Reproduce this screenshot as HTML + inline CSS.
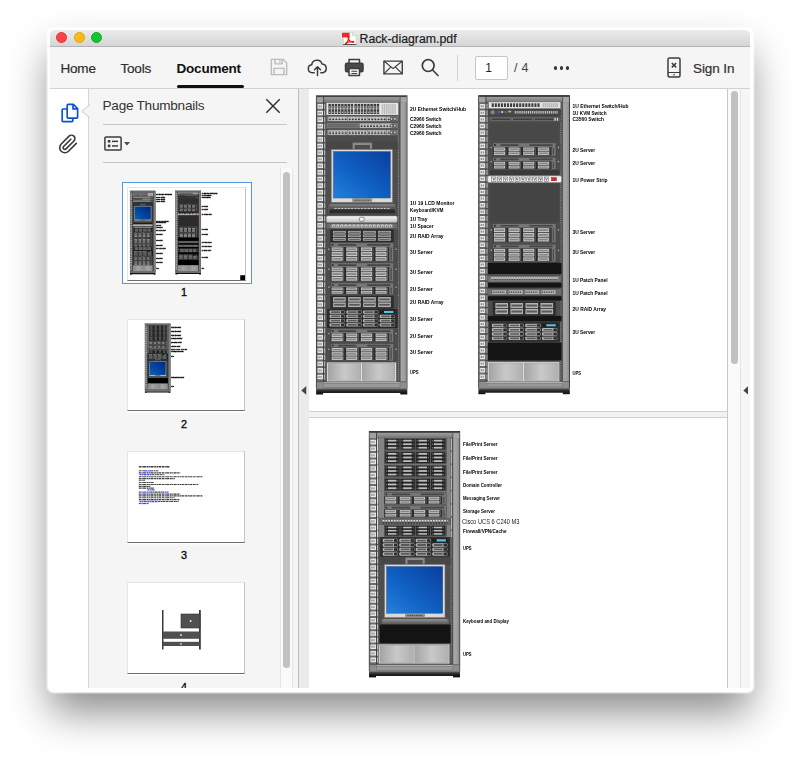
<!DOCTYPE html><html><head><meta charset="utf-8"><title>Rack-diagram.pdf</title><style>
*{box-sizing:border-box;margin:0;padding:0}
html,body{width:800px;height:761px;overflow:hidden;background:#fff}
body{font-family:"Liberation Sans",sans-serif;color:#2c2c2c;position:relative}
.abs{position:absolute}
#halo{left:47.500px;top:27.500px;width:705px;height:664px;background:#fff;border-radius:6px;
  box-shadow:0 0 2px .5px #fff}
#shadow{left:50px;top:30px;width:700px;height:660px;border-radius:5px;
  box-shadow:0 22px 40px 0 rgba(0,0,0,.46)}
#win{left:50px;top:30px;width:700px;height:660px;border-radius:5px 5px 3px 3px;overflow:hidden;background:#f5f5f5}
#title{left:0;top:0;width:700px;height:17px;background:linear-gradient(#ebebeb,#d5d5d5);border-bottom:1px solid #b4b4b4}
.tl{width:11px;height:11px;border-radius:50%;top:2px}
#ttext{top:1.500px;left:309.500px;font-size:12.300px;line-height:15px;color:#1e1e1e;white-space:nowrap;-webkit-text-stroke:.2px #1e1e1e}
#toolbar{left:0;top:17px;width:700px;height:42px;background:#f5f5f5;border-bottom:1px solid #d2d2d2}
.tab{top:14px;font-size:13.500px;line-height:16px;color:#2e2e2e;white-space:nowrap;letter-spacing:-.2px;-webkit-text-stroke:.2px #2e2e2e}
#rail{left:0;top:59px;width:39px;height:601px;background:#fff;border-right:1px solid #d6d6d6}
#panel{left:39px;top:59px;width:209px;height:601px;background:#f5f5f5}
.hr{height:1px;background:#c6c6c6;left:14px;width:184px}
#gut{left:248px;top:59px;width:11px;height:601px;background:#ebebeb;border-left:1px solid #bdbdbd}
#doc{left:259px;top:59px;width:418px;height:601px;background:#f2f2f2;overflow:hidden}
.page{left:0;width:418px;background:#fff}
#vsb{left:677px;top:59px;width:14px;height:601px;background:#fafafa;border-left:1px solid #c8c8c8;border-right:1px solid #e3e3e3}
#rgut{left:691px;top:59px;width:9px;height:601px;background:#f6f6f6}
.thumb{background:#fff;border-right:1.500px solid #c2c2c2;border-bottom:1.300px solid #6e6e6e;border-top:.6px solid #e6e6e6;border-left:.6px solid #e6e6e6;overflow:hidden;box-shadow:0 1.400px 0 #fff}
.tn{font-size:10.800px;line-height:11px;width:20px;text-align:center;color:#000;-webkit-text-stroke:.35px #111}
</style></head><body><div id="shadow" class="abs"></div><div id="halo" class="abs"></div><div id="win" class="abs"><div id="title" class="abs"><div class="abs tl" style="left:6px;background:#fc4249;border:.5px solid #e2343b"></div><div class="abs tl" style="left:23.5px;background:#fdb915;border:.5px solid #e2a212"></div><div class="abs tl" style="left:41px;background:#13c431;border:.5px solid #10a929"></div><svg class="abs" style="left:291.500px;top:1.500px" width="15" height="13.500" viewBox="0 0 15 13.500"><path d="M1.300 .4h9.200l3.600 3.300v9H1.300z" fill="#fff" stroke="#c4c4c4" stroke-width=".6"/><path d="M10.500 .4v3.300h3.600" fill="#e9e9e9" stroke="#bdbdbd" stroke-width=".5"/><rect x="0" y=".8" width="7.600" height="4.600" fill="#ee2a22"/><path d="M3.600 11.600c1.800-1.500 3-3.700 3.300-6 .1-1.200-.9-1.300-.9-.2.100 2.300 2.300 4.700 5 4.900 1.200.1 1-1-.3-.9-2.400.100-5 .9-7.100 2.200z" fill="none" stroke="#e8221a" stroke-width="1.300" stroke-linejoin="round"/><rect x="1.100" y="12.300" width="13.300" height="1.100" fill="#1a1a1a"/></svg><div id="ttext" class="abs">Rack-diagram.pdf</div></div><div id="toolbar" class="abs"><div class="abs tab" style="left:10.5px">Home</div><div class="abs tab" style="left:70.5px">Tools</div><div class="abs tab" style="left:126.500px;font-weight:bold;color:#111;letter-spacing:-.2px;-webkit-text-stroke:0">Document</div><div class="abs" style="left:127px;top:37.700px;width:66.500px;height:3px;border-radius:1.500px;background:#111"></div><svg class="abs" style="left:220.300px;top:11.300px" width="18" height="18" viewBox="0 0 20 20" fill="none" stroke="#bdbdbd" stroke-width="1.600" stroke-linejoin="round"><path d="M1.500 1.500h13l4 4v13h-17z"/><path d="M5.500 1.500v5h8v-5M4.500 18.500v-7h11v7"/><path d="M11 2.500v3" stroke-width="1.300"/></svg><svg class="abs" style="left:257.300px;top:11px" width="21" height="19" viewBox="0 0 22 20" fill="none" stroke="#3c3c3c" stroke-width="1.600" stroke-linecap="round" stroke-linejoin="round"><path d="M7.500 15.500H5.500a4.200 4.200 0 0 1-.6-8.350A5.600 5.600 0 0 1 15.800 6.300a4.650 4.650 0 0 1 .7 9.200h-2"/><path d="M11 18.500V9.500M7.800 12.400L11 9.200l3.200 3.200"/></svg><svg class="abs" style="left:294px;top:10.800px" width="20.500" height="19" viewBox="0 0 21 20" fill="none" stroke="#3c3c3c" stroke-width="1.600" stroke-linejoin="round"><path d="M5 5.500V1.500h11v4"/><rect x="1.300" y="5.500" width="18.400" height="9" rx="1.500" fill="#4a4a4a"/><rect x="5" y="11" width="11" height="7.500" fill="#f5f5f5"/><path d="M7.500 14h6M7.500 16.300h6" stroke-width="1.100"/></svg><svg class="abs" style="left:332.600px;top:12.600px" width="20.200" height="15" viewBox="0 0 22 16" fill="none" stroke="#3c3c3c" stroke-width="1.500" stroke-linejoin="round"><rect x="1" y="1" width="20" height="14"/><path d="M1 1l10 8.200L21 1M1 15l7.300-7.500M21 15l-7.300-7.500" stroke-width="1.300"/></svg><svg class="abs" style="left:370px;top:10px" width="20" height="20" viewBox="0 0 20 20" fill="none" stroke="#3c3c3c" stroke-width="1.700" stroke-linecap="round"><circle cx="8.200" cy="8.600" r="5.900"/><path d="M12.600 13l5.400 5.500"/></svg><svg class="abs" style="left:617px;top:10px" width="14" height="21" viewBox="0 0 14 21" fill="none" stroke="#3c3c3c" stroke-width="1.500" stroke-linejoin="round"><rect x="1" y="1" width="12" height="19" rx="1.500"/><path d="M1 15.500h12" stroke-width="1.200"/><path d="M4.800 6l4.400 4.400M9.200 6l-4.400 4.400" stroke-width="1.500"/><circle cx="7" cy="17.800" r=".8" fill="#3c3c3c" stroke="none"/></svg><div class="abs" style="left:407px;top:8px;width:1px;height:26px;background:#d0d0d0"></div><div class="abs" style="left:425px;top:9px;width:33px;height:24px;background:#fff;border:1px solid #c6c6c6;border-radius:2px"></div><div class="abs" style="left:425px;top:14px;width:27px;text-align:center;font-size:12px;line-height:14px;color:#222">1</div><div class="abs" style="left:464px;top:14px;font-size:12.5px;line-height:14px;color:#444;letter-spacing:.3px;white-space:nowrap">/ 4</div><div class="abs" style="left:503.5px;top:19px;width:3.600px;height:3.600px;border-radius:50%;background:#3a3a3a"></div><div class="abs" style="left:509.7px;top:19px;width:3.600px;height:3.600px;border-radius:50%;background:#3a3a3a"></div><div class="abs" style="left:515.9px;top:19px;width:3.600px;height:3.600px;border-radius:50%;background:#3a3a3a"></div><div class="abs tab" style="left:643px;color:#333;letter-spacing:-.1px">Sign In</div></div><div id="rail" class="abs"><svg class="abs" style="left:10.500px;top:14px" width="18" height="20" viewBox="0 0 18 20" fill="none" stroke="#0f52cc" stroke-width="1.700" stroke-linejoin="round"><path d="M7 1.300h5.300l4.300 4.300v8.700a.8.800 0 0 1-.8.800H7a.8.800 0 0 1-.8-.8V2.100a.8.800 0 0 1 .8-.8z" fill="#fff"/><path d="M12 1.500v4.400h4.400"/><path d="M6 6H2a.8.800 0 0 0-.8.800v11a.8.800 0 0 0 .8.800h9a.8.800 0 0 0 .8-.8V15.300"/></svg><svg class="abs" style="left:7.800px;top:44.800px" width="20.500" height="20.500" viewBox="0 0 24 24" fill="none" stroke="#3a3a3a" stroke-width="1.900" stroke-linecap="round" stroke-linejoin="round"><path d="M21.440 11.050l-9.190 9.190a6 6 0 0 1-8.490-8.490l9.190-9.190a4 4 0 0 1 5.660 5.660l-9.200 9.190a2 2 0 0 1-2.830-2.830l8.490-8.480"/></svg></div><div id="panel" class="abs"><svg class="abs" style="left:-8.500px;top:14.500px" width="10" height="15" viewBox="0 0 10 15"><path d="M10 .2L.8 7.300 10 14.200z" fill="#f5f5f5"/><path d="M8.800 .5L.8 7.300l8 6.600" fill="none" stroke="#c9c9c9" stroke-width="1"/></svg><div class="abs" style="left:13.500px;top:8.400px;font-size:13.600px;line-height:17px;color:#333;letter-spacing:-.25px;white-space:nowrap">Page Thumbnails</div><svg class="abs" style="left:176px;top:9px" width="16" height="16" viewBox="0 0 16 16"><path d="M1.300 1.300l13.400 13.400M14.700 1.300L1.300 14.700" stroke="#333" stroke-width="1.500" fill="none"/></svg><div class="abs hr" style="top:34.500px"></div><svg class="abs" style="left:14.700px;top:47px" width="28" height="16" viewBox="0 0 28 16"><rect x=".9" y=".9" width="16.200" height="13.200" rx="1.200" fill="none" stroke="#3c3c3c" stroke-width="1.500"/><rect x="3.800" y="4" width="2.600" height="2.600" fill="#3c3c3c"/><rect x="3.800" y="8.600" width="2.600" height="2.600" fill="#3c3c3c"/><rect x="8" y="4.600" width="6" height="1.500" fill="#3c3c3c"/><rect x="8" y="9.200" width="6" height="1.500" fill="#3c3c3c"/><path d="M20 6h6l-3 3.500z" fill="#4a4a4a"/></svg><div class="abs hr" style="top:73px"></div><div class="abs" style="left:190.500px;top:79px;width:13px;height:522px;background:#fafafa;border-left:1px solid #e4e4e4;border-right:1px solid #e4e4e4"></div><div class="abs" style="left:194px;top:83px;width:7px;height:496px;border-radius:3.500px;background:#c1c1c1"></div><div class="abs" style="left:33px;top:93.200px;width:129.500px;height:102px;background:#fff;border:1.300px solid #5597dc"></div><div class="abs thumb" style="left:38.200px;top:98.200px;width:118.800px;height:93.400px"><svg class="abs" style="left:0;top:.5px;filter:brightness(.8) contrast(1.15)" width="117" height="91.300" viewBox="309 89 418 326" font-family="Liberation Sans, sans-serif"><use href="#r1"/><use href="#r2"/><use href="#l1" stroke="#000" stroke-width="1"/><rect x="710" y="397" width="17" height="18" fill="#111"/></svg></div><div class="abs tn" style="left:85px;top:197.700px">1</div><div class="abs thumb" style="left:37.700px;top:230.300px;width:118.800px;height:91.900px"><svg class="abs" style="left:0;top:0;filter:brightness(.8) contrast(1.15)" width="117.600" height="90.300" viewBox="309 418 418 321" font-family="Liberation Sans, sans-serif"><use href="#r3"/><use href="#l3" stroke="#000" stroke-width="1"/></svg></div><div class="abs tn" style="left:85px;top:329.600px">2</div><div class="abs thumb" style="left:37.700px;top:361.600px;width:118.800px;height:92px"><svg class="abs" style="left:0;top:-1.100px;filter:blur(.25px)" width="118.500" height="91.500" viewBox="0 0 118.500 91.500"><path d="M10.8 15.8h31.2" stroke="#1c1c1c" stroke-width="1.5" stroke-dasharray="2.100 .5 1.300 .4 2.800 .6" opacity=".85"/><path d="M10.8 19.8h6.2" stroke="#1c1c1c" stroke-width="1" stroke-dasharray="2.100 .5 1.300 .4 2.800 .6" opacity=".85"/><path d="M17 19.8h6.3" stroke="#1a2cf0" stroke-width="1.2" stroke-dasharray="2.100 .5 1.300 .4 2.800 .6" opacity=".85"/><path d="M23.3 19.8h7" stroke="#1c1c1c" stroke-width="1" stroke-dasharray="2.100 .5 1.300 .4 2.800 .6" opacity=".85"/><path d="M10.8 21.8h41.4" stroke="#1c1c1c" stroke-width="1.3" stroke-dasharray="2.100 .5 1.300 .4 2.800 .6" opacity=".85"/><path d="M11.5 23.7h12.5" stroke="#1a2cf0" stroke-width="1.3" stroke-dasharray="2.100 .5 1.300 .4 2.800 .6" opacity=".85"/><path d="M24 23.7h12.5" stroke="#1c1c1c" stroke-width="1" stroke-dasharray="2.100 .5 1.300 .4 2.800 .6" opacity=".85"/><path d="M10.8 25.7h64" stroke="#1c1c1c" stroke-width="1.1" stroke-dasharray="2.100 .5 1.300 .4 2.800 .6" opacity=".85"/><path d="M10.8 27.6h35.9" stroke="#1c1c1c" stroke-width="1.1" stroke-dasharray="2.100 .5 1.300 .4 2.800 .6" opacity=".85"/><path d="M10.8 29.3h6.2" stroke="#1c1c1c" stroke-width="1.1" stroke-dasharray="2.100 .5 1.300 .4 2.800 .6" opacity=".85"/><path d="M10.8 31.5h14.8" stroke="#1c1c1c" stroke-width="1.1" stroke-dasharray="2.100 .5 1.300 .4 2.800 .6" opacity=".85"/><path d="M10.8 33.5h59.4" stroke="#1c1c1c" stroke-width="1.1" stroke-dasharray="2.100 .5 1.300 .4 2.800 .6" opacity=".85"/><path d="M10.8 35.4h11.7" stroke="#1c1c1c" stroke-width="1.2" stroke-dasharray="2.100 .5 1.300 .4 2.800 .6" opacity=".85"/><path d="M10.8 37.1h15.6" stroke="#1c1c1c" stroke-width="1.2" stroke-dasharray="2.100 .5 1.300 .4 2.800 .6" opacity=".85"/><path d="M19.4 38.9h7.8" stroke="#1a2cf0" stroke-width="1.2" stroke-dasharray="2.100 .5 1.300 .4 2.800 .6" opacity=".85"/><path d="M10.8 41.1h11.7" stroke="#1a2cf0" stroke-width="1.3" stroke-dasharray="2.100 .5 1.300 .4 2.800 .6" opacity=".85"/><path d="M22.5 41.1h11.7" stroke="#1c1c1c" stroke-width="1.1" stroke-dasharray="2.100 .5 1.300 .4 2.800 .6" opacity=".85"/><path d="M34.2 41.1h6.3" stroke="#1a2cf0" stroke-width="1.3" stroke-dasharray="2.100 .5 1.300 .4 2.800 .6" opacity=".85"/><path d="M10.8 43.1h41.4" stroke="#1c1c1c" stroke-width="1.4" stroke-dasharray="2.100 .5 1.300 .4 2.800 .6" opacity=".85"/><path d="M10.8 44.9h64" stroke="#1c1c1c" stroke-width="1.2" stroke-dasharray="2.100 .5 1.300 .4 2.800 .6" opacity=".85"/><path d="M10.8 46.7h35.9" stroke="#1c1c1c" stroke-width="1.1" stroke-dasharray="2.100 .5 1.300 .4 2.800 .6" opacity=".85"/><path d="M10.8 48.7h40.6" stroke="#1c1c1c" stroke-width="1.2" stroke-dasharray="2.100 .5 1.300 .4 2.800 .6" opacity=".85"/><path d="M11.5 50.5h18.7" stroke="#1a2cf0" stroke-width="1.3" stroke-dasharray="2.100 .5 1.300 .4 2.800 .6" opacity=".85"/><path d="M30.2 50.5h20.4" stroke="#1c1c1c" stroke-width="1.1" stroke-dasharray="2.100 .5 1.300 .4 2.800 .6" opacity=".85"/><path d="M10.8 52.6h10.1" stroke="#1c1c1c" stroke-width="1" stroke-dasharray="2.100 .5 1.300 .4 2.800 .6" opacity=".85"/></svg></div><div class="abs tn" style="left:85px;top:460.500px">3</div><div class="abs thumb" style="left:37.700px;top:493.100px;width:118.800px;height:92px"><svg class="abs" style="left:0;top:0" width="118.500" height="91.500" viewBox="0 0 118.500 91.500"><rect x="34" y="27" width="1.500" height="39.500" fill="#3a3a3a"/><rect x="71" y="27" width="1.800" height="39.500" fill="#3a3a3a"/><rect x="53" y="31" width="19" height="14" fill="#505050" stroke="#333" stroke-width=".6"/><circle cx="62.600" cy="38" r="1" fill="#eee"/><rect x="35" y="48.500" width="36.500" height="7.300" fill="#505050"/><circle cx="53" cy="52" r=".9" fill="#eee"/><rect x="35" y="58.800" width="36.500" height="4.200" fill="#505050"/><circle cx="53" cy="60.900" r=".8" fill="#eee"/></svg></div><div class="abs tn" style="left:85px;top:592.500px">4</div></div><div id="gut" class="abs"><svg class="abs" style="left:2.400px;top:297px" width="5.600" height="8.800" viewBox="0 0 6 10"><path d="M5.800 0v10L.2 5z" fill="#444"/></svg></div><div id="doc" class="abs"><div class="abs page" style="top:0;height:323px;border-bottom:1px solid #cfcfcf"></div><div class="abs page" style="top:328px;height:280px;border-top:1px solid #cfcfcf"></div><svg class="abs" style="left:0;top:0;filter:blur(.3px)" width="418" height="601" viewBox="309 89 418 601" font-family="Liberation Sans, sans-serif" shape-rendering="geometricPrecision"><defs><linearGradient id="gscr" x1="0" y1="1" x2="1" y2="0"><stop offset="0" stop-color="#2480dc"/><stop offset=".45" stop-color="#0f60c2"/><stop offset="1" stop-color="#0a3f9e"/></linearGradient><linearGradient id="gups" x1="0" y1="0" x2="1" y2="0"><stop offset="0" stop-color="#a4a4a4"/><stop offset=".5" stop-color="#c9c9c9"/><stop offset="1" stop-color="#b0b0b0"/></linearGradient><linearGradient id="gcap" x1="0" y1="0" x2="0" y2="1"><stop offset="0" stop-color="#a6a6a6"/><stop offset="1" stop-color="#747474"/></linearGradient><linearGradient id="grail" x1="0" y1="0" x2="1" y2="0"><stop offset="0" stop-color="#a9a9a9"/><stop offset=".6" stop-color="#a0a0a0"/><stop offset="1" stop-color="#8c8c8c"/></linearGradient><linearGradient id="gtray" x1="0" y1="0" x2="0" y2="1"><stop offset="0" stop-color="#f6f6f6"/><stop offset="1" stop-color="#c4c4c4"/></linearGradient><linearGradient id="gbase" x1="0" y1="0" x2="0" y2="1"><stop offset="0" stop-color="#8a8a8a"/><stop offset=".3" stop-color="#4a4a4a"/><stop offset=".6" stop-color="#262626"/><stop offset="1" stop-color="#1a1a1a"/></linearGradient></defs><g id="r1"><rect x="316.4" y="95.8" width="90.6" height="292.5" fill="#858585" stroke="#333" stroke-width=".9"/><rect x="323.4" y="102.3" width="77.1" height="279.5" fill="#4e4e4e"/><rect x="316.9" y="96.3" width="89.6" height="6.2" fill="url(#gcap)"/><rect x="316.9" y="96.3" width="6.6" height="6.2" fill="#a2a2a2"/><rect x="400.4" y="96.3" width="6.1" height="6.2" fill="#a6a6a6"/><path d="M316.9 96.6L406.5 96.6" stroke="#2e2e2e" stroke-width="0.9"/><path d="M323.6 102.5L400.2 102.5" stroke="#555" stroke-width="0.6"/><rect x="316.9" y="102.5" width="6.6" height="285.5" fill="#6a6a6a"/><rect x="317.5" y="104.1" width="5.7" height="4.6" fill="#e6e6e6" rx=".6"/><rect x="318.4" y="105.4" width="1.3" height="2" fill="#8a8a8a"/><rect x="320.3" y="105.4" width="1.5" height="2" fill="#9a9a9a"/><rect x="317.5" y="110.7" width="5.7" height="4.6" fill="#e6e6e6" rx=".6"/><rect x="318.4" y="112" width="1.3" height="2" fill="#8a8a8a"/><rect x="320.3" y="112" width="1.5" height="2" fill="#9a9a9a"/><rect x="317.5" y="117.3" width="5.7" height="4.6" fill="#e6e6e6" rx=".6"/><rect x="318.4" y="118.6" width="1.3" height="2" fill="#8a8a8a"/><rect x="320.3" y="118.6" width="1.5" height="2" fill="#9a9a9a"/><rect x="317.5" y="123.9" width="5.7" height="4.6" fill="#e6e6e6" rx=".6"/><rect x="318.4" y="125.2" width="1.3" height="2" fill="#8a8a8a"/><rect x="320.3" y="125.2" width="1.5" height="2" fill="#9a9a9a"/><rect x="317.5" y="130.5" width="5.7" height="4.6" fill="#e6e6e6" rx=".6"/><rect x="318.4" y="131.8" width="1.3" height="2" fill="#8a8a8a"/><rect x="320.3" y="131.8" width="1.5" height="2" fill="#9a9a9a"/><rect x="317.5" y="137.1" width="5.7" height="4.6" fill="#e6e6e6" rx=".6"/><rect x="318.4" y="138.4" width="1.3" height="2" fill="#8a8a8a"/><rect x="320.3" y="138.4" width="1.5" height="2" fill="#9a9a9a"/><rect x="317.5" y="143.7" width="5.7" height="4.6" fill="#e6e6e6" rx=".6"/><rect x="318.4" y="145" width="1.3" height="2" fill="#8a8a8a"/><rect x="320.3" y="145" width="1.5" height="2" fill="#9a9a9a"/><rect x="317.5" y="150.3" width="5.7" height="4.6" fill="#e6e6e6" rx=".6"/><rect x="318.4" y="151.6" width="1.3" height="2" fill="#8a8a8a"/><rect x="320.3" y="151.6" width="1.5" height="2" fill="#9a9a9a"/><rect x="317.5" y="156.9" width="5.7" height="4.6" fill="#e6e6e6" rx=".6"/><rect x="318.4" y="158.2" width="1.3" height="2" fill="#8a8a8a"/><rect x="320.3" y="158.2" width="1.5" height="2" fill="#9a9a9a"/><rect x="317.5" y="163.5" width="5.7" height="4.6" fill="#e6e6e6" rx=".6"/><rect x="318.4" y="164.8" width="1.3" height="2" fill="#8a8a8a"/><rect x="320.3" y="164.8" width="1.5" height="2" fill="#9a9a9a"/><rect x="317.5" y="170.1" width="5.7" height="4.6" fill="#e6e6e6" rx=".6"/><rect x="318.4" y="171.4" width="1.3" height="2" fill="#8a8a8a"/><rect x="320.3" y="171.4" width="1.5" height="2" fill="#9a9a9a"/><rect x="317.5" y="176.7" width="5.7" height="4.6" fill="#e6e6e6" rx=".6"/><rect x="318.4" y="178" width="1.3" height="2" fill="#8a8a8a"/><rect x="320.3" y="178" width="1.5" height="2" fill="#9a9a9a"/><rect x="317.5" y="183.3" width="5.7" height="4.6" fill="#e6e6e6" rx=".6"/><rect x="318.4" y="184.6" width="1.3" height="2" fill="#8a8a8a"/><rect x="320.3" y="184.6" width="1.5" height="2" fill="#9a9a9a"/><rect x="317.5" y="189.9" width="5.7" height="4.6" fill="#e6e6e6" rx=".6"/><rect x="318.4" y="191.2" width="1.3" height="2" fill="#8a8a8a"/><rect x="320.3" y="191.2" width="1.5" height="2" fill="#9a9a9a"/><rect x="317.5" y="196.5" width="5.7" height="4.6" fill="#e6e6e6" rx=".6"/><rect x="318.4" y="197.8" width="1.3" height="2" fill="#8a8a8a"/><rect x="320.3" y="197.8" width="1.5" height="2" fill="#9a9a9a"/><rect x="317.5" y="203.1" width="5.7" height="4.6" fill="#e6e6e6" rx=".6"/><rect x="318.4" y="204.4" width="1.3" height="2" fill="#8a8a8a"/><rect x="320.3" y="204.4" width="1.5" height="2" fill="#9a9a9a"/><rect x="317.5" y="209.7" width="5.7" height="4.6" fill="#e6e6e6" rx=".6"/><rect x="318.4" y="211" width="1.3" height="2" fill="#8a8a8a"/><rect x="320.3" y="211" width="1.5" height="2" fill="#9a9a9a"/><rect x="317.5" y="216.3" width="5.7" height="4.6" fill="#e6e6e6" rx=".6"/><rect x="318.4" y="217.6" width="1.3" height="2" fill="#8a8a8a"/><rect x="320.3" y="217.6" width="1.5" height="2" fill="#9a9a9a"/><rect x="317.5" y="222.9" width="5.7" height="4.6" fill="#e6e6e6" rx=".6"/><rect x="318.4" y="224.2" width="1.3" height="2" fill="#8a8a8a"/><rect x="320.3" y="224.2" width="1.5" height="2" fill="#9a9a9a"/><rect x="317.5" y="229.5" width="5.7" height="4.6" fill="#e6e6e6" rx=".6"/><rect x="318.4" y="230.8" width="1.3" height="2" fill="#8a8a8a"/><rect x="320.3" y="230.8" width="1.5" height="2" fill="#9a9a9a"/><rect x="317.5" y="236.1" width="5.7" height="4.6" fill="#e6e6e6" rx=".6"/><rect x="318.4" y="237.4" width="1.3" height="2" fill="#8a8a8a"/><rect x="320.3" y="237.4" width="1.5" height="2" fill="#9a9a9a"/><rect x="317.5" y="242.7" width="5.7" height="4.6" fill="#e6e6e6" rx=".6"/><rect x="318.4" y="244" width="1.3" height="2" fill="#8a8a8a"/><rect x="320.3" y="244" width="1.5" height="2" fill="#9a9a9a"/><rect x="317.5" y="249.3" width="5.7" height="4.6" fill="#e6e6e6" rx=".6"/><rect x="318.4" y="250.6" width="1.3" height="2" fill="#8a8a8a"/><rect x="320.3" y="250.6" width="1.5" height="2" fill="#9a9a9a"/><rect x="317.5" y="255.9" width="5.7" height="4.6" fill="#e6e6e6" rx=".6"/><rect x="318.4" y="257.2" width="1.3" height="2" fill="#8a8a8a"/><rect x="320.3" y="257.2" width="1.5" height="2" fill="#9a9a9a"/><rect x="317.5" y="262.5" width="5.7" height="4.6" fill="#e6e6e6" rx=".6"/><rect x="318.4" y="263.8" width="1.3" height="2" fill="#8a8a8a"/><rect x="320.3" y="263.8" width="1.5" height="2" fill="#9a9a9a"/><rect x="317.5" y="269.1" width="5.7" height="4.6" fill="#e6e6e6" rx=".6"/><rect x="318.4" y="270.4" width="1.3" height="2" fill="#8a8a8a"/><rect x="320.3" y="270.4" width="1.5" height="2" fill="#9a9a9a"/><rect x="317.5" y="275.7" width="5.7" height="4.6" fill="#e6e6e6" rx=".6"/><rect x="318.4" y="277" width="1.3" height="2" fill="#8a8a8a"/><rect x="320.3" y="277" width="1.5" height="2" fill="#9a9a9a"/><rect x="317.5" y="282.3" width="5.7" height="4.6" fill="#e6e6e6" rx=".6"/><rect x="318.4" y="283.6" width="1.3" height="2" fill="#8a8a8a"/><rect x="320.3" y="283.6" width="1.5" height="2" fill="#9a9a9a"/><rect x="317.5" y="288.9" width="5.7" height="4.6" fill="#e6e6e6" rx=".6"/><rect x="318.4" y="290.2" width="1.3" height="2" fill="#8a8a8a"/><rect x="320.3" y="290.2" width="1.5" height="2" fill="#9a9a9a"/><rect x="317.5" y="295.5" width="5.7" height="4.6" fill="#e6e6e6" rx=".6"/><rect x="318.4" y="296.8" width="1.3" height="2" fill="#8a8a8a"/><rect x="320.3" y="296.8" width="1.5" height="2" fill="#9a9a9a"/><rect x="317.5" y="302.1" width="5.7" height="4.6" fill="#e6e6e6" rx=".6"/><rect x="318.4" y="303.4" width="1.3" height="2" fill="#8a8a8a"/><rect x="320.3" y="303.4" width="1.5" height="2" fill="#9a9a9a"/><rect x="317.5" y="308.7" width="5.7" height="4.6" fill="#e6e6e6" rx=".6"/><rect x="318.4" y="310" width="1.3" height="2" fill="#8a8a8a"/><rect x="320.3" y="310" width="1.5" height="2" fill="#9a9a9a"/><rect x="317.5" y="315.3" width="5.7" height="4.6" fill="#e6e6e6" rx=".6"/><rect x="318.4" y="316.6" width="1.3" height="2" fill="#8a8a8a"/><rect x="320.3" y="316.6" width="1.5" height="2" fill="#9a9a9a"/><rect x="317.5" y="321.9" width="5.7" height="4.6" fill="#e6e6e6" rx=".6"/><rect x="318.4" y="323.2" width="1.3" height="2" fill="#8a8a8a"/><rect x="320.3" y="323.2" width="1.5" height="2" fill="#9a9a9a"/><rect x="317.5" y="328.5" width="5.7" height="4.6" fill="#e6e6e6" rx=".6"/><rect x="318.4" y="329.8" width="1.3" height="2" fill="#8a8a8a"/><rect x="320.3" y="329.8" width="1.5" height="2" fill="#9a9a9a"/><rect x="317.5" y="335.1" width="5.7" height="4.6" fill="#e6e6e6" rx=".6"/><rect x="318.4" y="336.4" width="1.3" height="2" fill="#8a8a8a"/><rect x="320.3" y="336.4" width="1.5" height="2" fill="#9a9a9a"/><rect x="317.5" y="341.7" width="5.7" height="4.6" fill="#e6e6e6" rx=".6"/><rect x="318.4" y="343" width="1.3" height="2" fill="#8a8a8a"/><rect x="320.3" y="343" width="1.5" height="2" fill="#9a9a9a"/><rect x="317.5" y="348.3" width="5.7" height="4.6" fill="#e6e6e6" rx=".6"/><rect x="318.4" y="349.6" width="1.3" height="2" fill="#8a8a8a"/><rect x="320.3" y="349.6" width="1.5" height="2" fill="#9a9a9a"/><rect x="317.5" y="354.9" width="5.7" height="4.6" fill="#e6e6e6" rx=".6"/><rect x="318.4" y="356.2" width="1.3" height="2" fill="#8a8a8a"/><rect x="320.3" y="356.2" width="1.5" height="2" fill="#9a9a9a"/><rect x="317.5" y="361.5" width="5.7" height="4.6" fill="#e6e6e6" rx=".6"/><rect x="318.4" y="362.8" width="1.3" height="2" fill="#8a8a8a"/><rect x="320.3" y="362.8" width="1.5" height="2" fill="#9a9a9a"/><rect x="317.5" y="368.1" width="5.7" height="4.6" fill="#e6e6e6" rx=".6"/><rect x="318.4" y="369.4" width="1.3" height="2" fill="#8a8a8a"/><rect x="320.3" y="369.4" width="1.5" height="2" fill="#9a9a9a"/><rect x="317.5" y="374.7" width="5.7" height="4.6" fill="#e6e6e6" rx=".6"/><rect x="318.4" y="376" width="1.3" height="2" fill="#8a8a8a"/><rect x="320.3" y="376" width="1.5" height="2" fill="#9a9a9a"/><path d="M323.6 96.3L323.6 388.3" stroke="#363636" stroke-width="0.8"/><path d="M324.7 103.8V380.8" stroke="#e6e6e6" stroke-width=".8" stroke-dasharray="5.400 1.200"/><rect x="397.4" y="102.5" width="3" height="279.5" fill="#555"/><path d="M398.4 103.8V380.3" stroke="#bdbdbd" stroke-width=".7" stroke-dasharray=".8 1.400"/><rect x="400.3" y="102.5" width="6.2" height="285.5" fill="url(#grail)"/><path d="M400.1 96.3L400.1 388.3" stroke="#4a4a4a" stroke-width="0.7"/><rect x="316.9" y="381.8" width="89.6" height="6.5" fill="#8d8d8d"/><rect x="323.9" y="382" width="76.1" height="1.4" fill="#bababa"/><rect x="323.9" y="383.4" width="76.1" height="3.8" fill="#999" stroke="#666" stroke-width=".4"/><path d="M316.9 381.8L406.5 381.8" stroke="#4a4a4a" stroke-width="0.6"/><rect x="316.1" y="388.1" width="91.2" height="5" fill="url(#gbase)" rx=".8"/><rect x="316.1" y="392.5" width="7" height="2" fill="#141414"/><rect x="400.3" y="392.5" width="7" height="2" fill="#141414"/><rect x="326.4" y="102.8" width="71.8" height="12.2" fill="#ececec" stroke="#8a8a8a" stroke-width=".4"/><rect x="328.4" y="103.8" width="2.49" height="4.8" fill="#3a3a3a"/><rect x="328.95" y="106.2" width="1.39" height="1.44" fill="#a8a8a8"/><rect x="331.59" y="103.8" width="2.49" height="4.8" fill="#3a3a3a"/><rect x="332.14" y="106.2" width="1.39" height="1.44" fill="#a8a8a8"/><rect x="334.77" y="103.8" width="2.49" height="4.8" fill="#3a3a3a"/><rect x="335.32" y="106.2" width="1.39" height="1.44" fill="#a8a8a8"/><rect x="337.96" y="103.8" width="2.49" height="4.8" fill="#3a3a3a"/><rect x="338.51" y="106.2" width="1.39" height="1.44" fill="#a8a8a8"/><rect x="341.15" y="103.8" width="2.49" height="4.8" fill="#3a3a3a"/><rect x="341.7" y="106.2" width="1.39" height="1.44" fill="#a8a8a8"/><rect x="344.33" y="103.8" width="2.49" height="4.8" fill="#3a3a3a"/><rect x="344.88" y="106.2" width="1.39" height="1.44" fill="#a8a8a8"/><rect x="347.52" y="103.8" width="2.49" height="4.8" fill="#3a3a3a"/><rect x="348.07" y="106.2" width="1.39" height="1.44" fill="#a8a8a8"/><rect x="350.71" y="103.8" width="2.49" height="4.8" fill="#3a3a3a"/><rect x="351.26" y="106.2" width="1.39" height="1.44" fill="#a8a8a8"/><rect x="354.4" y="103.8" width="2.49" height="4.8" fill="#3a3a3a"/><rect x="354.95" y="106.2" width="1.39" height="1.44" fill="#a8a8a8"/><rect x="357.58" y="103.8" width="2.49" height="4.8" fill="#3a3a3a"/><rect x="358.13" y="106.2" width="1.39" height="1.44" fill="#a8a8a8"/><rect x="360.77" y="103.8" width="2.49" height="4.8" fill="#3a3a3a"/><rect x="361.32" y="106.2" width="1.39" height="1.44" fill="#a8a8a8"/><rect x="363.96" y="103.8" width="2.49" height="4.8" fill="#3a3a3a"/><rect x="364.51" y="106.2" width="1.39" height="1.44" fill="#a8a8a8"/><rect x="367.14" y="103.8" width="2.49" height="4.8" fill="#3a3a3a"/><rect x="367.69" y="106.2" width="1.39" height="1.44" fill="#a8a8a8"/><rect x="370.33" y="103.8" width="2.49" height="4.8" fill="#3a3a3a"/><rect x="370.88" y="106.2" width="1.39" height="1.44" fill="#a8a8a8"/><rect x="373.52" y="103.8" width="2.49" height="4.8" fill="#3a3a3a"/><rect x="374.07" y="106.2" width="1.39" height="1.44" fill="#a8a8a8"/><rect x="376.7" y="103.8" width="2.49" height="4.8" fill="#3a3a3a"/><rect x="377.25" y="106.2" width="1.39" height="1.44" fill="#a8a8a8"/><rect x="328.4" y="109.2" width="2.49" height="4.8" fill="#3a3a3a"/><rect x="328.95" y="111.6" width="1.39" height="1.44" fill="#a8a8a8"/><rect x="331.59" y="109.2" width="2.49" height="4.8" fill="#3a3a3a"/><rect x="332.14" y="111.6" width="1.39" height="1.44" fill="#a8a8a8"/><rect x="334.77" y="109.2" width="2.49" height="4.8" fill="#3a3a3a"/><rect x="335.32" y="111.6" width="1.39" height="1.44" fill="#a8a8a8"/><rect x="337.96" y="109.2" width="2.49" height="4.8" fill="#3a3a3a"/><rect x="338.51" y="111.6" width="1.39" height="1.44" fill="#a8a8a8"/><rect x="341.15" y="109.2" width="2.49" height="4.8" fill="#3a3a3a"/><rect x="341.7" y="111.6" width="1.39" height="1.44" fill="#a8a8a8"/><rect x="344.33" y="109.2" width="2.49" height="4.8" fill="#3a3a3a"/><rect x="344.88" y="111.6" width="1.39" height="1.44" fill="#a8a8a8"/><rect x="347.52" y="109.2" width="2.49" height="4.8" fill="#3a3a3a"/><rect x="348.07" y="111.6" width="1.39" height="1.44" fill="#a8a8a8"/><rect x="350.71" y="109.2" width="2.49" height="4.8" fill="#3a3a3a"/><rect x="351.26" y="111.6" width="1.39" height="1.44" fill="#a8a8a8"/><rect x="354.4" y="109.2" width="2.49" height="4.8" fill="#3a3a3a"/><rect x="354.95" y="111.6" width="1.39" height="1.44" fill="#a8a8a8"/><rect x="357.58" y="109.2" width="2.49" height="4.8" fill="#3a3a3a"/><rect x="358.13" y="111.6" width="1.39" height="1.44" fill="#a8a8a8"/><rect x="360.77" y="109.2" width="2.49" height="4.8" fill="#3a3a3a"/><rect x="361.32" y="111.6" width="1.39" height="1.44" fill="#a8a8a8"/><rect x="363.96" y="109.2" width="2.49" height="4.8" fill="#3a3a3a"/><rect x="364.51" y="111.6" width="1.39" height="1.44" fill="#a8a8a8"/><rect x="367.14" y="109.2" width="2.49" height="4.8" fill="#3a3a3a"/><rect x="367.69" y="111.6" width="1.39" height="1.44" fill="#a8a8a8"/><rect x="370.33" y="109.2" width="2.49" height="4.8" fill="#3a3a3a"/><rect x="370.88" y="111.6" width="1.39" height="1.44" fill="#a8a8a8"/><rect x="373.52" y="109.2" width="2.49" height="4.8" fill="#3a3a3a"/><rect x="374.07" y="111.6" width="1.39" height="1.44" fill="#a8a8a8"/><rect x="376.7" y="109.2" width="2.49" height="4.8" fill="#3a3a3a"/><rect x="377.25" y="111.6" width="1.39" height="1.44" fill="#a8a8a8"/><rect x="381.39" y="103.7" width="14.81" height="10.4" fill="#d4d4d4"/><path d="M382.39 104L382.39 113.8" stroke="#a2a2a2" stroke-width="0.5"/><path d="M384.49 104L384.49 113.8" stroke="#a2a2a2" stroke-width="0.5"/><path d="M386.59 104L386.59 113.8" stroke="#a2a2a2" stroke-width="0.5"/><path d="M388.69 104L388.69 113.8" stroke="#a2a2a2" stroke-width="0.5"/><path d="M390.79 104L390.79 113.8" stroke="#a2a2a2" stroke-width="0.5"/><path d="M392.89 104L392.89 113.8" stroke="#a2a2a2" stroke-width="0.5"/><path d="M394.99 104L394.99 113.8" stroke="#a2a2a2" stroke-width="0.5"/><rect x="326.4" y="116" width="71.8" height="5.8" fill="#7a7a7a" stroke="#4a4a4a" stroke-width=".4"/><rect x="328.6" y="116.9" width="3.1" height="4" fill="#e4e4e4"/><rect x="329.15" y="117.5" width="2" height="2.2" fill="#858585"/><rect x="329.2" y="119.02" width="1.9" height="1.28" fill="#3c3c3c"/><rect x="331.7" y="116.9" width="3.1" height="4" fill="#e4e4e4"/><rect x="332.25" y="117.5" width="2" height="2.2" fill="#858585"/><rect x="332.3" y="119.02" width="1.9" height="1.28" fill="#3c3c3c"/><rect x="334.8" y="116.9" width="3.1" height="4" fill="#e4e4e4"/><rect x="335.35" y="117.5" width="2" height="2.2" fill="#858585"/><rect x="335.4" y="119.02" width="1.9" height="1.28" fill="#3c3c3c"/><rect x="337.9" y="116.9" width="3.1" height="4" fill="#e4e4e4"/><rect x="338.45" y="117.5" width="2" height="2.2" fill="#858585"/><rect x="338.5" y="119.02" width="1.9" height="1.28" fill="#3c3c3c"/><rect x="341" y="116.9" width="3.1" height="4" fill="#e4e4e4"/><rect x="341.55" y="117.5" width="2" height="2.2" fill="#858585"/><rect x="341.6" y="119.02" width="1.9" height="1.28" fill="#3c3c3c"/><rect x="344.1" y="116.9" width="3.1" height="4" fill="#e4e4e4"/><rect x="344.65" y="117.5" width="2" height="2.2" fill="#858585"/><rect x="344.7" y="119.02" width="1.9" height="1.28" fill="#3c3c3c"/><rect x="348.1" y="116.9" width="3.1" height="4" fill="#e4e4e4"/><rect x="348.65" y="117.5" width="2" height="2.2" fill="#858585"/><rect x="348.7" y="119.02" width="1.9" height="1.28" fill="#3c3c3c"/><rect x="351.2" y="116.9" width="3.1" height="4" fill="#e4e4e4"/><rect x="351.75" y="117.5" width="2" height="2.2" fill="#858585"/><rect x="351.8" y="119.02" width="1.9" height="1.28" fill="#3c3c3c"/><rect x="354.3" y="116.9" width="3.1" height="4" fill="#e4e4e4"/><rect x="354.85" y="117.5" width="2" height="2.2" fill="#858585"/><rect x="354.9" y="119.02" width="1.9" height="1.28" fill="#3c3c3c"/><rect x="357.4" y="116.9" width="3.1" height="4" fill="#e4e4e4"/><rect x="357.95" y="117.5" width="2" height="2.2" fill="#858585"/><rect x="358" y="119.02" width="1.9" height="1.28" fill="#3c3c3c"/><rect x="360.5" y="116.9" width="3.1" height="4" fill="#e4e4e4"/><rect x="361.05" y="117.5" width="2" height="2.2" fill="#858585"/><rect x="361.1" y="119.02" width="1.9" height="1.28" fill="#3c3c3c"/><rect x="363.6" y="116.9" width="3.1" height="4" fill="#e4e4e4"/><rect x="364.15" y="117.5" width="2" height="2.2" fill="#858585"/><rect x="364.2" y="119.02" width="1.9" height="1.28" fill="#3c3c3c"/><rect x="367.6" y="116.9" width="3.1" height="4" fill="#e4e4e4"/><rect x="368.15" y="117.5" width="2" height="2.2" fill="#858585"/><rect x="368.2" y="119.02" width="1.9" height="1.28" fill="#3c3c3c"/><rect x="370.7" y="116.9" width="3.1" height="4" fill="#e4e4e4"/><rect x="371.25" y="117.5" width="2" height="2.2" fill="#858585"/><rect x="371.3" y="119.02" width="1.9" height="1.28" fill="#3c3c3c"/><rect x="373.8" y="116.9" width="3.1" height="4" fill="#e4e4e4"/><rect x="374.35" y="117.5" width="2" height="2.2" fill="#858585"/><rect x="374.4" y="119.02" width="1.9" height="1.28" fill="#3c3c3c"/><rect x="376.9" y="116.9" width="3.1" height="4" fill="#e4e4e4"/><rect x="377.45" y="117.5" width="2" height="2.2" fill="#858585"/><rect x="377.5" y="119.02" width="1.9" height="1.28" fill="#3c3c3c"/><rect x="380" y="116.9" width="3.1" height="4" fill="#e4e4e4"/><rect x="380.55" y="117.5" width="2" height="2.2" fill="#858585"/><rect x="380.6" y="119.02" width="1.9" height="1.28" fill="#3c3c3c"/><rect x="383.1" y="116.9" width="3.1" height="4" fill="#e4e4e4"/><rect x="383.65" y="117.5" width="2" height="2.2" fill="#858585"/><rect x="383.7" y="119.02" width="1.9" height="1.28" fill="#3c3c3c"/><rect x="387.1" y="116.9" width="3.1" height="4" fill="#e4e4e4"/><rect x="387.65" y="117.5" width="2" height="2.2" fill="#858585"/><rect x="387.7" y="119.02" width="1.9" height="1.28" fill="#3c3c3c"/><rect x="390.2" y="117.2" width="2.6" height="3.4" fill="#444"/><rect x="393.6" y="117.2" width="2.6" height="3.4" fill="#444"/><rect x="390.7" y="117.8" width="1.6" height="2" fill="#cfcfcf"/><rect x="394.1" y="117.8" width="1.6" height="2" fill="#cfcfcf"/><rect x="326.4" y="122.8" width="71.8" height="5.7" fill="#7a7a7a" stroke="#4a4a4a" stroke-width=".4"/><rect x="327.9" y="124" width="30.16" height="3.3" fill="#6a6a6a"/><rect x="360.15" y="123.7" width="3.1" height="3.9" fill="#e4e4e4"/><rect x="360.7" y="124.3" width="2" height="2.1" fill="#858585"/><rect x="360.75" y="125.76" width="1.9" height="1.25" fill="#3c3c3c"/><rect x="363.25" y="123.7" width="3.1" height="3.9" fill="#e4e4e4"/><rect x="363.8" y="124.3" width="2" height="2.1" fill="#858585"/><rect x="363.85" y="125.76" width="1.9" height="1.25" fill="#3c3c3c"/><rect x="366.35" y="123.7" width="3.1" height="3.9" fill="#e4e4e4"/><rect x="366.9" y="124.3" width="2" height="2.1" fill="#858585"/><rect x="366.95" y="125.76" width="1.9" height="1.25" fill="#3c3c3c"/><rect x="369.45" y="123.7" width="3.1" height="3.9" fill="#e4e4e4"/><rect x="370" y="124.3" width="2" height="2.1" fill="#858585"/><rect x="370.05" y="125.76" width="1.9" height="1.25" fill="#3c3c3c"/><rect x="372.55" y="123.7" width="3.1" height="3.9" fill="#e4e4e4"/><rect x="373.1" y="124.3" width="2" height="2.1" fill="#858585"/><rect x="373.15" y="125.76" width="1.9" height="1.25" fill="#3c3c3c"/><rect x="375.65" y="123.7" width="3.1" height="3.9" fill="#e4e4e4"/><rect x="376.2" y="124.3" width="2" height="2.1" fill="#858585"/><rect x="376.25" y="125.76" width="1.9" height="1.25" fill="#3c3c3c"/><rect x="379.65" y="123.7" width="3.1" height="3.9" fill="#e4e4e4"/><rect x="380.2" y="124.3" width="2" height="2.1" fill="#858585"/><rect x="380.25" y="125.76" width="1.9" height="1.25" fill="#3c3c3c"/><rect x="382.75" y="123.7" width="3.1" height="3.9" fill="#e4e4e4"/><rect x="383.3" y="124.3" width="2" height="2.1" fill="#858585"/><rect x="383.35" y="125.76" width="1.9" height="1.25" fill="#3c3c3c"/><rect x="385.85" y="123.7" width="3.1" height="3.9" fill="#e4e4e4"/><rect x="386.4" y="124.3" width="2" height="2.1" fill="#858585"/><rect x="386.45" y="125.76" width="1.9" height="1.25" fill="#3c3c3c"/><rect x="388.95" y="123.7" width="3.1" height="3.9" fill="#e4e4e4"/><rect x="389.5" y="124.3" width="2" height="2.1" fill="#858585"/><rect x="389.55" y="125.76" width="1.9" height="1.25" fill="#3c3c3c"/><rect x="390.2" y="124" width="2.6" height="3.3" fill="#444"/><rect x="393.6" y="124" width="2.6" height="3.3" fill="#444"/><rect x="390.7" y="124.6" width="1.6" height="1.9" fill="#cfcfcf"/><rect x="394.1" y="124.6" width="1.6" height="1.9" fill="#cfcfcf"/><rect x="326.4" y="129.6" width="71.8" height="5.8" fill="#7a7a7a" stroke="#4a4a4a" stroke-width=".4"/><rect x="328.6" y="130.5" width="3.1" height="4" fill="#e4e4e4"/><rect x="329.15" y="131.1" width="2" height="2.2" fill="#858585"/><rect x="329.2" y="132.62" width="1.9" height="1.28" fill="#3c3c3c"/><rect x="331.7" y="130.5" width="3.1" height="4" fill="#e4e4e4"/><rect x="332.25" y="131.1" width="2" height="2.2" fill="#858585"/><rect x="332.3" y="132.62" width="1.9" height="1.28" fill="#3c3c3c"/><rect x="334.8" y="130.5" width="3.1" height="4" fill="#e4e4e4"/><rect x="335.35" y="131.1" width="2" height="2.2" fill="#858585"/><rect x="335.4" y="132.62" width="1.9" height="1.28" fill="#3c3c3c"/><rect x="337.9" y="130.5" width="3.1" height="4" fill="#e4e4e4"/><rect x="338.45" y="131.1" width="2" height="2.2" fill="#858585"/><rect x="338.5" y="132.62" width="1.9" height="1.28" fill="#3c3c3c"/><rect x="341" y="130.5" width="3.1" height="4" fill="#e4e4e4"/><rect x="341.55" y="131.1" width="2" height="2.2" fill="#858585"/><rect x="341.6" y="132.62" width="1.9" height="1.28" fill="#3c3c3c"/><rect x="344.1" y="130.5" width="3.1" height="4" fill="#e4e4e4"/><rect x="344.65" y="131.1" width="2" height="2.2" fill="#858585"/><rect x="344.7" y="132.62" width="1.9" height="1.28" fill="#3c3c3c"/><rect x="348.1" y="130.5" width="3.1" height="4" fill="#e4e4e4"/><rect x="348.65" y="131.1" width="2" height="2.2" fill="#858585"/><rect x="348.7" y="132.62" width="1.9" height="1.28" fill="#3c3c3c"/><rect x="351.2" y="130.5" width="3.1" height="4" fill="#e4e4e4"/><rect x="351.75" y="131.1" width="2" height="2.2" fill="#858585"/><rect x="351.8" y="132.62" width="1.9" height="1.28" fill="#3c3c3c"/><rect x="354.3" y="130.5" width="3.1" height="4" fill="#e4e4e4"/><rect x="354.85" y="131.1" width="2" height="2.2" fill="#858585"/><rect x="354.9" y="132.62" width="1.9" height="1.28" fill="#3c3c3c"/><rect x="357.4" y="130.5" width="3.1" height="4" fill="#e4e4e4"/><rect x="357.95" y="131.1" width="2" height="2.2" fill="#858585"/><rect x="358" y="132.62" width="1.9" height="1.28" fill="#3c3c3c"/><rect x="360.5" y="130.5" width="3.1" height="4" fill="#e4e4e4"/><rect x="361.05" y="131.1" width="2" height="2.2" fill="#858585"/><rect x="361.1" y="132.62" width="1.9" height="1.28" fill="#3c3c3c"/><rect x="363.6" y="130.5" width="3.1" height="4" fill="#e4e4e4"/><rect x="364.15" y="131.1" width="2" height="2.2" fill="#858585"/><rect x="364.2" y="132.62" width="1.9" height="1.28" fill="#3c3c3c"/><rect x="367.6" y="130.5" width="3.1" height="4" fill="#e4e4e4"/><rect x="368.15" y="131.1" width="2" height="2.2" fill="#858585"/><rect x="368.2" y="132.62" width="1.9" height="1.28" fill="#3c3c3c"/><rect x="370.7" y="130.5" width="3.1" height="4" fill="#e4e4e4"/><rect x="371.25" y="131.1" width="2" height="2.2" fill="#858585"/><rect x="371.3" y="132.62" width="1.9" height="1.28" fill="#3c3c3c"/><rect x="373.8" y="130.5" width="3.1" height="4" fill="#e4e4e4"/><rect x="374.35" y="131.1" width="2" height="2.2" fill="#858585"/><rect x="374.4" y="132.62" width="1.9" height="1.28" fill="#3c3c3c"/><rect x="376.9" y="130.5" width="3.1" height="4" fill="#e4e4e4"/><rect x="377.45" y="131.1" width="2" height="2.2" fill="#858585"/><rect x="377.5" y="132.62" width="1.9" height="1.28" fill="#3c3c3c"/><rect x="380" y="130.5" width="3.1" height="4" fill="#e4e4e4"/><rect x="380.55" y="131.1" width="2" height="2.2" fill="#858585"/><rect x="380.6" y="132.62" width="1.9" height="1.28" fill="#3c3c3c"/><rect x="383.1" y="130.5" width="3.1" height="4" fill="#e4e4e4"/><rect x="383.65" y="131.1" width="2" height="2.2" fill="#858585"/><rect x="383.7" y="132.62" width="1.9" height="1.28" fill="#3c3c3c"/><rect x="387.1" y="130.5" width="3.1" height="4" fill="#e4e4e4"/><rect x="387.65" y="131.1" width="2" height="2.2" fill="#858585"/><rect x="387.7" y="132.62" width="1.9" height="1.28" fill="#3c3c3c"/><rect x="390.2" y="130.8" width="2.6" height="3.4" fill="#444"/><rect x="393.6" y="130.8" width="2.6" height="3.4" fill="#444"/><rect x="390.7" y="131.4" width="1.6" height="2" fill="#cfcfcf"/><rect x="394.1" y="131.4" width="1.6" height="2" fill="#cfcfcf"/><rect x="328.4" y="136.5" width="67.8" height="13.5" fill="#4c4c4c"/><rect x="326.4" y="141.6" width="71.8" height="8" fill="#474747"/><rect x="352.5" y="142.6" width="19.6" height="6.5" fill="#8c8c8c" rx="1" stroke="#5f5f5f" stroke-width=".5"/><rect x="354.7" y="145" width="15.2" height="4.2" fill="#4d4d4d"/><rect x="331.2" y="149.4" width="61.4" height="53" fill="#dcdad6" stroke="#6f6f6f" stroke-width=".6"/><rect x="333.5" y="151.6" width="56.8" height="46.4" fill="url(#gscr)" stroke="#27508f" stroke-width=".5"/><rect x="352.7" y="198.8" width="19.2" height="2.8" fill="#9b9b9b" stroke="#666" stroke-width=".4"/><path d="M354.3 200.2H370.3" stroke="#444" stroke-width="1" stroke-dasharray="1.500 .7"/><rect x="327.9" y="203.2" width="68.8" height="10.8" fill="#5a5a5a" stroke="#3a3a3a" stroke-width=".4"/><rect x="329.9" y="203.8" width="64.8" height="2.6" fill="#777"/><path d="M334.4 208.4H390.2" stroke="#dedede" stroke-width=".9" stroke-dasharray="2.300 1"/><rect x="329.4" y="209.4" width="65.8" height="4" fill="#2c2c2c"/><rect x="326.4" y="216" width="70.8" height="6.4" fill="url(#gtray)" rx="1.500" stroke="#8f8f8f" stroke-width=".4"/><rect x="359.4" y="217.3" width="4.8" height="3.8" fill="#f4f4f4" rx="1" stroke="#555" stroke-width=".6"/><rect x="326.4" y="223.2" width="70.8" height="5.7" fill="#6b6b6b" stroke="#484848" stroke-width=".4"/><rect x="330.4" y="224.2" width="62.8" height="3.7" fill="#8c8c8c" rx="1"/><rect x="332.4" y="224.6" width="2.6" height="2.9" fill="#e1e1e1" rx="1"/><rect x="333.2" y="225.6" width="1.1" height="1.7" fill="#5b5b5b"/><rect x="336.45" y="224.6" width="2.6" height="2.9" fill="#e1e1e1" rx="1"/><rect x="337.25" y="225.6" width="1.1" height="1.7" fill="#5b5b5b"/><rect x="340.5" y="224.6" width="2.6" height="2.9" fill="#e1e1e1" rx="1"/><rect x="341.3" y="225.6" width="1.1" height="1.7" fill="#5b5b5b"/><rect x="344.55" y="224.6" width="2.6" height="2.9" fill="#e1e1e1" rx="1"/><rect x="345.35" y="225.6" width="1.1" height="1.7" fill="#5b5b5b"/><rect x="348.6" y="224.6" width="2.6" height="2.9" fill="#e1e1e1" rx="1"/><rect x="349.4" y="225.6" width="1.1" height="1.7" fill="#5b5b5b"/><rect x="352.65" y="224.6" width="2.6" height="2.9" fill="#e1e1e1" rx="1"/><rect x="353.45" y="225.6" width="1.1" height="1.7" fill="#5b5b5b"/><rect x="356.7" y="224.6" width="2.6" height="2.9" fill="#e1e1e1" rx="1"/><rect x="357.5" y="225.6" width="1.1" height="1.7" fill="#5b5b5b"/><rect x="360.75" y="224.6" width="2.6" height="2.9" fill="#e1e1e1" rx="1"/><rect x="361.55" y="225.6" width="1.1" height="1.7" fill="#5b5b5b"/><rect x="364.8" y="224.6" width="2.6" height="2.9" fill="#e1e1e1" rx="1"/><rect x="365.6" y="225.6" width="1.1" height="1.7" fill="#5b5b5b"/><rect x="368.85" y="224.6" width="2.6" height="2.9" fill="#e1e1e1" rx="1"/><rect x="369.65" y="225.6" width="1.1" height="1.7" fill="#5b5b5b"/><rect x="372.9" y="224.6" width="2.6" height="2.9" fill="#e1e1e1" rx="1"/><rect x="373.7" y="225.6" width="1.1" height="1.7" fill="#5b5b5b"/><rect x="376.95" y="224.6" width="2.6" height="2.9" fill="#e1e1e1" rx="1"/><rect x="377.75" y="225.6" width="1.1" height="1.7" fill="#5b5b5b"/><rect x="381" y="224.6" width="2.6" height="2.9" fill="#e1e1e1" rx="1"/><rect x="381.8" y="225.6" width="1.1" height="1.7" fill="#5b5b5b"/><rect x="385.05" y="224.6" width="2.6" height="2.9" fill="#e1e1e1" rx="1"/><rect x="385.85" y="225.6" width="1.1" height="1.7" fill="#5b5b5b"/><rect x="389.1" y="224.6" width="2.6" height="2.9" fill="#e1e1e1" rx="1"/><rect x="389.9" y="225.6" width="1.1" height="1.7" fill="#5b5b5b"/><rect x="326.4" y="229.8" width="71.8" height="12" fill="#4c4c4c"/><rect x="330.7" y="229.8" width="62.5" height="12" fill="#2e2e2e" stroke="#222" stroke-width=".4"/><rect x="333.1" y="230.9" width="12.63" height="2.73" fill="#b2b2b2"/><rect x="334.1" y="231.72" width="10.63" height="1.09" fill="#5a5a5a"/><rect x="333.1" y="234.43" width="12.63" height="2.73" fill="#b2b2b2"/><rect x="334.1" y="235.25" width="10.63" height="1.09" fill="#5a5a5a"/><rect x="333.1" y="237.97" width="12.63" height="2.73" fill="#b2b2b2"/><rect x="334.1" y="238.79" width="10.63" height="1.09" fill="#5a5a5a"/><rect x="348.12" y="230.9" width="12.63" height="2.73" fill="#b2b2b2"/><rect x="349.12" y="231.72" width="10.63" height="1.09" fill="#5a5a5a"/><rect x="348.12" y="234.43" width="12.63" height="2.73" fill="#b2b2b2"/><rect x="349.12" y="235.25" width="10.63" height="1.09" fill="#5a5a5a"/><rect x="348.12" y="237.97" width="12.63" height="2.73" fill="#b2b2b2"/><rect x="349.12" y="238.79" width="10.63" height="1.09" fill="#5a5a5a"/><rect x="363.15" y="230.9" width="12.63" height="2.73" fill="#b2b2b2"/><rect x="364.15" y="231.72" width="10.63" height="1.09" fill="#5a5a5a"/><rect x="363.15" y="234.43" width="12.63" height="2.73" fill="#b2b2b2"/><rect x="364.15" y="235.25" width="10.63" height="1.09" fill="#5a5a5a"/><rect x="363.15" y="237.97" width="12.63" height="2.73" fill="#b2b2b2"/><rect x="364.15" y="238.79" width="10.63" height="1.09" fill="#5a5a5a"/><rect x="378.18" y="230.9" width="12.63" height="2.73" fill="#b2b2b2"/><rect x="379.18" y="231.72" width="10.63" height="1.09" fill="#5a5a5a"/><rect x="378.18" y="234.43" width="12.63" height="2.73" fill="#b2b2b2"/><rect x="379.18" y="235.25" width="10.63" height="1.09" fill="#5a5a5a"/><rect x="378.18" y="237.97" width="12.63" height="2.73" fill="#b2b2b2"/><rect x="379.18" y="238.79" width="10.63" height="1.09" fill="#5a5a5a"/><rect x="326.4" y="242.9" width="71.8" height="18.9" fill="#4c4c4c"/><rect x="328.4" y="248.57" width="1" height="1.2" fill="#d8d8d8"/><rect x="395.6" y="248.57" width="1" height="1.2" fill="#d8d8d8"/><rect x="330.5" y="242.9" width="63.1" height="18.9" fill="#6b6b6b" stroke="#3a3a3a" stroke-width=".4"/><rect x="330.9" y="243.3" width="62.3" height="3.4" fill="#767676"/><rect x="331.7" y="244" width="1.8" height="1.8" fill="#2e2e2e"/><rect x="338" y="244.1" width="18.5" height="1.7" fill="#454545" rx=".85"/><rect x="367" y="244.1" width="23.5" height="1.7" fill="#454545" rx=".85"/><rect x="330.7" y="247" width="58.6" height="14.1" fill="#2a2a2a"/><rect x="331.6" y="247.35" width="11.05" height="4" fill="#c6c6c6"/><rect x="332.4" y="248.47" width="9.25" height="1.76" fill="#858585"/><rect x="331.6" y="252.05" width="11.05" height="4" fill="#c6c6c6"/><rect x="332.4" y="253.17" width="9.25" height="1.76" fill="#858585"/><rect x="331.6" y="256.75" width="11.05" height="4" fill="#c6c6c6"/><rect x="332.4" y="257.87" width="9.25" height="1.76" fill="#858585"/><rect x="343.05" y="247.4" width="1.1" height="13.3" fill="#5e5e5e"/><rect x="346.25" y="247.35" width="11.05" height="4" fill="#c6c6c6"/><rect x="347.05" y="248.47" width="9.25" height="1.76" fill="#858585"/><rect x="346.25" y="252.05" width="11.05" height="4" fill="#c6c6c6"/><rect x="347.05" y="253.17" width="9.25" height="1.76" fill="#858585"/><rect x="346.25" y="256.75" width="11.05" height="4" fill="#c6c6c6"/><rect x="347.05" y="257.87" width="9.25" height="1.76" fill="#858585"/><rect x="357.7" y="247.4" width="1.1" height="13.3" fill="#5e5e5e"/><rect x="360.9" y="247.35" width="11.05" height="4" fill="#c6c6c6"/><rect x="361.7" y="248.47" width="9.25" height="1.76" fill="#858585"/><rect x="360.9" y="252.05" width="11.05" height="4" fill="#c6c6c6"/><rect x="361.7" y="253.17" width="9.25" height="1.76" fill="#858585"/><rect x="360.9" y="256.75" width="11.05" height="4" fill="#c6c6c6"/><rect x="361.7" y="257.87" width="9.25" height="1.76" fill="#858585"/><rect x="372.35" y="247.4" width="1.1" height="13.3" fill="#5e5e5e"/><rect x="375.55" y="247.35" width="11.05" height="4" fill="#c6c6c6"/><rect x="376.35" y="248.47" width="9.25" height="1.76" fill="#858585"/><rect x="375.55" y="252.05" width="11.05" height="4" fill="#c6c6c6"/><rect x="376.35" y="253.17" width="9.25" height="1.76" fill="#858585"/><rect x="375.55" y="256.75" width="11.05" height="4" fill="#c6c6c6"/><rect x="376.35" y="257.87" width="9.25" height="1.76" fill="#858585"/><rect x="387" y="247.4" width="1.1" height="13.3" fill="#5e5e5e"/><rect x="389.6" y="247" width="3.5" height="14.1" fill="#7a7a7a"/><rect x="390.4" y="247.6" width="1.4" height="12.9" fill="#4c4c4c"/><rect x="326.4" y="263" width="71.8" height="18.8" fill="#4c4c4c"/><rect x="328.4" y="268.64" width="1" height="1.2" fill="#d8d8d8"/><rect x="395.6" y="268.64" width="1" height="1.2" fill="#d8d8d8"/><rect x="330.5" y="263" width="63.1" height="18.8" fill="#6b6b6b" stroke="#3a3a3a" stroke-width=".4"/><rect x="330.9" y="263.4" width="62.3" height="3.4" fill="#767676"/><rect x="331.7" y="264.1" width="1.8" height="1.8" fill="#2e2e2e"/><rect x="338" y="264.2" width="18.5" height="1.7" fill="#454545" rx=".85"/><rect x="367" y="264.2" width="23.5" height="1.7" fill="#454545" rx=".85"/><rect x="330.7" y="267.1" width="58.6" height="14" fill="#2a2a2a"/><rect x="331.6" y="267.45" width="11.05" height="3.97" fill="#c6c6c6"/><rect x="332.4" y="268.56" width="9.25" height="1.75" fill="#858585"/><rect x="331.6" y="272.12" width="11.05" height="3.97" fill="#c6c6c6"/><rect x="332.4" y="273.23" width="9.25" height="1.75" fill="#858585"/><rect x="331.6" y="276.78" width="11.05" height="3.97" fill="#c6c6c6"/><rect x="332.4" y="277.89" width="9.25" height="1.75" fill="#858585"/><rect x="343.05" y="267.5" width="1.1" height="13.2" fill="#5e5e5e"/><rect x="346.25" y="267.45" width="11.05" height="3.97" fill="#c6c6c6"/><rect x="347.05" y="268.56" width="9.25" height="1.75" fill="#858585"/><rect x="346.25" y="272.12" width="11.05" height="3.97" fill="#c6c6c6"/><rect x="347.05" y="273.23" width="9.25" height="1.75" fill="#858585"/><rect x="346.25" y="276.78" width="11.05" height="3.97" fill="#c6c6c6"/><rect x="347.05" y="277.89" width="9.25" height="1.75" fill="#858585"/><rect x="357.7" y="267.5" width="1.1" height="13.2" fill="#5e5e5e"/><rect x="360.9" y="267.45" width="11.05" height="3.97" fill="#c6c6c6"/><rect x="361.7" y="268.56" width="9.25" height="1.75" fill="#858585"/><rect x="360.9" y="272.12" width="11.05" height="3.97" fill="#c6c6c6"/><rect x="361.7" y="273.23" width="9.25" height="1.75" fill="#858585"/><rect x="360.9" y="276.78" width="11.05" height="3.97" fill="#c6c6c6"/><rect x="361.7" y="277.89" width="9.25" height="1.75" fill="#858585"/><rect x="372.35" y="267.5" width="1.1" height="13.2" fill="#5e5e5e"/><rect x="375.55" y="267.45" width="11.05" height="3.97" fill="#c6c6c6"/><rect x="376.35" y="268.56" width="9.25" height="1.75" fill="#858585"/><rect x="375.55" y="272.12" width="11.05" height="3.97" fill="#c6c6c6"/><rect x="376.35" y="273.23" width="9.25" height="1.75" fill="#858585"/><rect x="375.55" y="276.78" width="11.05" height="3.97" fill="#c6c6c6"/><rect x="376.35" y="277.89" width="9.25" height="1.75" fill="#858585"/><rect x="387" y="267.5" width="1.1" height="13.2" fill="#5e5e5e"/><rect x="389.6" y="267.1" width="3.5" height="14" fill="#7a7a7a"/><rect x="390.4" y="267.7" width="1.4" height="12.8" fill="#4c4c4c"/><rect x="326.4" y="283" width="71.8" height="11.8" fill="#4c4c4c"/><rect x="328.4" y="286.54" width="1" height="1.2" fill="#d8d8d8"/><rect x="395.6" y="286.54" width="1" height="1.2" fill="#d8d8d8"/><rect x="330.5" y="283" width="63.1" height="11.8" fill="#6b6b6b" stroke="#3a3a3a" stroke-width=".4"/><rect x="330.9" y="283.4" width="62.3" height="3.4" fill="#767676"/><rect x="331.7" y="284.1" width="1.8" height="1.8" fill="#2e2e2e"/><rect x="338" y="284.2" width="18.5" height="1.7" fill="#454545" rx=".85"/><rect x="367" y="284.2" width="23.5" height="1.7" fill="#454545" rx=".85"/><rect x="330.7" y="287.1" width="58.6" height="7" fill="#2a2a2a"/><rect x="331.6" y="287.45" width="11.05" height="2.8" fill="#c6c6c6"/><rect x="332.4" y="288.23" width="9.25" height="1.23" fill="#858585"/><rect x="331.6" y="290.95" width="11.05" height="2.8" fill="#c6c6c6"/><rect x="332.4" y="291.73" width="9.25" height="1.23" fill="#858585"/><rect x="343.05" y="287.5" width="1.1" height="6.2" fill="#5e5e5e"/><rect x="346.25" y="287.45" width="11.05" height="2.8" fill="#c6c6c6"/><rect x="347.05" y="288.23" width="9.25" height="1.23" fill="#858585"/><rect x="346.25" y="290.95" width="11.05" height="2.8" fill="#c6c6c6"/><rect x="347.05" y="291.73" width="9.25" height="1.23" fill="#858585"/><rect x="357.7" y="287.5" width="1.1" height="6.2" fill="#5e5e5e"/><rect x="360.9" y="287.45" width="11.05" height="2.8" fill="#c6c6c6"/><rect x="361.7" y="288.23" width="9.25" height="1.23" fill="#858585"/><rect x="360.9" y="290.95" width="11.05" height="2.8" fill="#c6c6c6"/><rect x="361.7" y="291.73" width="9.25" height="1.23" fill="#858585"/><rect x="372.35" y="287.5" width="1.1" height="6.2" fill="#5e5e5e"/><rect x="375.55" y="287.45" width="11.05" height="2.8" fill="#c6c6c6"/><rect x="376.35" y="288.23" width="9.25" height="1.23" fill="#858585"/><rect x="375.55" y="290.95" width="11.05" height="2.8" fill="#c6c6c6"/><rect x="376.35" y="291.73" width="9.25" height="1.23" fill="#858585"/><rect x="387" y="287.5" width="1.1" height="6.2" fill="#5e5e5e"/><rect x="389.6" y="287.1" width="3.5" height="7" fill="#7a7a7a"/><rect x="390.4" y="287.7" width="1.4" height="5.8" fill="#4c4c4c"/><rect x="326.4" y="296" width="71.8" height="12.2" fill="#4c4c4c"/><rect x="330.7" y="296" width="62.5" height="12.2" fill="#2e2e2e" stroke="#222" stroke-width=".4"/><rect x="333.1" y="297.1" width="12.63" height="4.6" fill="#b2b2b2"/><rect x="334.1" y="298.48" width="10.63" height="1.84" fill="#5a5a5a"/><rect x="333.1" y="302.5" width="12.63" height="4.6" fill="#b2b2b2"/><rect x="334.1" y="303.88" width="10.63" height="1.84" fill="#5a5a5a"/><rect x="348.12" y="297.1" width="12.63" height="4.6" fill="#b2b2b2"/><rect x="349.12" y="298.48" width="10.63" height="1.84" fill="#5a5a5a"/><rect x="348.12" y="302.5" width="12.63" height="4.6" fill="#b2b2b2"/><rect x="349.12" y="303.88" width="10.63" height="1.84" fill="#5a5a5a"/><rect x="363.15" y="297.1" width="12.63" height="4.6" fill="#b2b2b2"/><rect x="364.15" y="298.48" width="10.63" height="1.84" fill="#5a5a5a"/><rect x="363.15" y="302.5" width="12.63" height="4.6" fill="#b2b2b2"/><rect x="364.15" y="303.88" width="10.63" height="1.84" fill="#5a5a5a"/><rect x="378.18" y="297.1" width="12.63" height="4.6" fill="#b2b2b2"/><rect x="379.18" y="298.48" width="10.63" height="1.84" fill="#5a5a5a"/><rect x="378.18" y="302.5" width="12.63" height="4.6" fill="#b2b2b2"/><rect x="379.18" y="303.88" width="10.63" height="1.84" fill="#5a5a5a"/><rect x="327.4" y="309.2" width="69.8" height="18.6" fill="#2d2d2d" stroke="#1d1d1d" stroke-width=".4"/><rect x="329.6" y="310.45" width="15.3" height="3.35" fill="#b6b6b6" rx="1"/><rect x="331" y="311.35" width="9.2" height="1.55" fill="#5a5a5a" rx=".6"/><rect x="341" y="310.85" width="3.5" height="2.55" fill="#2c2c2c"/><rect x="329.6" y="314.7" width="15.3" height="3.35" fill="#b6b6b6" rx="1"/><rect x="331" y="315.6" width="9.2" height="1.55" fill="#5a5a5a" rx=".6"/><rect x="341" y="315.1" width="3.5" height="2.55" fill="#2c2c2c"/><rect x="329.6" y="318.95" width="15.3" height="3.35" fill="#b6b6b6" rx="1"/><rect x="331" y="319.85" width="9.2" height="1.55" fill="#5a5a5a" rx=".6"/><rect x="341" y="319.35" width="3.5" height="2.55" fill="#2c2c2c"/><rect x="329.6" y="323.2" width="15.3" height="3.35" fill="#b6b6b6" rx="1"/><rect x="331" y="324.1" width="9.2" height="1.55" fill="#5a5a5a" rx=".6"/><rect x="341" y="323.6" width="3.5" height="2.55" fill="#2c2c2c"/><rect x="346.3" y="310.45" width="15.3" height="3.35" fill="#b6b6b6" rx="1"/><rect x="347.7" y="311.35" width="9.2" height="1.55" fill="#5a5a5a" rx=".6"/><rect x="357.7" y="310.85" width="3.5" height="2.55" fill="#2c2c2c"/><rect x="346.3" y="314.7" width="15.3" height="3.35" fill="#b6b6b6" rx="1"/><rect x="347.7" y="315.6" width="9.2" height="1.55" fill="#5a5a5a" rx=".6"/><rect x="357.7" y="315.1" width="3.5" height="2.55" fill="#2c2c2c"/><rect x="346.3" y="318.95" width="15.3" height="3.35" fill="#b6b6b6" rx="1"/><rect x="347.7" y="319.85" width="9.2" height="1.55" fill="#5a5a5a" rx=".6"/><rect x="357.7" y="319.35" width="3.5" height="2.55" fill="#2c2c2c"/><rect x="346.3" y="323.2" width="15.3" height="3.35" fill="#b6b6b6" rx="1"/><rect x="347.7" y="324.1" width="9.2" height="1.55" fill="#5a5a5a" rx=".6"/><rect x="357.7" y="323.6" width="3.5" height="2.55" fill="#2c2c2c"/><rect x="363" y="310.45" width="15.3" height="3.35" fill="#b6b6b6" rx="1"/><rect x="364.4" y="311.35" width="9.2" height="1.55" fill="#5a5a5a" rx=".6"/><rect x="374.4" y="310.85" width="3.5" height="2.55" fill="#2c2c2c"/><rect x="363" y="314.7" width="15.3" height="3.35" fill="#b6b6b6" rx="1"/><rect x="364.4" y="315.6" width="9.2" height="1.55" fill="#5a5a5a" rx=".6"/><rect x="374.4" y="315.1" width="3.5" height="2.55" fill="#2c2c2c"/><rect x="363" y="318.95" width="15.3" height="3.35" fill="#b6b6b6" rx="1"/><rect x="364.4" y="319.85" width="9.2" height="1.55" fill="#5a5a5a" rx=".6"/><rect x="374.4" y="319.35" width="3.5" height="2.55" fill="#2c2c2c"/><rect x="363" y="323.2" width="15.3" height="3.35" fill="#b6b6b6" rx="1"/><rect x="364.4" y="324.1" width="9.2" height="1.55" fill="#5a5a5a" rx=".6"/><rect x="374.4" y="323.6" width="3.5" height="2.55" fill="#2c2c2c"/><rect x="379.7" y="310.45" width="15.3" height="3.35" fill="#1f1f1f"/><rect x="384" y="310.95" width="9.5" height="2.05" fill="#53c3e6"/><rect x="379.7" y="314.7" width="15.3" height="3.35" fill="#b6b6b6" rx="1"/><rect x="381.1" y="315.6" width="9.2" height="1.55" fill="#5a5a5a" rx=".6"/><rect x="391.1" y="315.1" width="3.5" height="2.55" fill="#2c2c2c"/><rect x="379.7" y="318.95" width="15.3" height="3.35" fill="#b6b6b6" rx="1"/><rect x="381.1" y="319.85" width="9.2" height="1.55" fill="#5a5a5a" rx=".6"/><rect x="391.1" y="319.35" width="3.5" height="2.55" fill="#2c2c2c"/><rect x="379.7" y="323.2" width="15.3" height="3.35" fill="#b6b6b6" rx="1"/><rect x="381.1" y="324.1" width="9.2" height="1.55" fill="#5a5a5a" rx=".6"/><rect x="391.1" y="323.6" width="3.5" height="2.55" fill="#2c2c2c"/><rect x="326.4" y="329" width="71.8" height="13.2" fill="#4c4c4c"/><rect x="328.4" y="332.96" width="1" height="1.2" fill="#d8d8d8"/><rect x="395.6" y="332.96" width="1" height="1.2" fill="#d8d8d8"/><rect x="330.5" y="329" width="63.1" height="13.2" fill="#6b6b6b" stroke="#3a3a3a" stroke-width=".4"/><rect x="330.9" y="329.4" width="62.3" height="3.4" fill="#767676"/><rect x="331.7" y="330.1" width="1.8" height="1.8" fill="#2e2e2e"/><rect x="338" y="330.2" width="18.5" height="1.7" fill="#454545" rx=".85"/><rect x="367" y="330.2" width="23.5" height="1.7" fill="#454545" rx=".85"/><rect x="330.7" y="333.1" width="58.6" height="8.4" fill="#2a2a2a"/><rect x="331.6" y="333.45" width="11.05" height="3.5" fill="#c6c6c6"/><rect x="332.4" y="334.43" width="9.25" height="1.54" fill="#858585"/><rect x="331.6" y="337.65" width="11.05" height="3.5" fill="#c6c6c6"/><rect x="332.4" y="338.63" width="9.25" height="1.54" fill="#858585"/><rect x="343.05" y="333.5" width="1.1" height="7.6" fill="#5e5e5e"/><rect x="346.25" y="333.45" width="11.05" height="3.5" fill="#c6c6c6"/><rect x="347.05" y="334.43" width="9.25" height="1.54" fill="#858585"/><rect x="346.25" y="337.65" width="11.05" height="3.5" fill="#c6c6c6"/><rect x="347.05" y="338.63" width="9.25" height="1.54" fill="#858585"/><rect x="357.7" y="333.5" width="1.1" height="7.6" fill="#5e5e5e"/><rect x="360.9" y="333.45" width="11.05" height="3.5" fill="#c6c6c6"/><rect x="361.7" y="334.43" width="9.25" height="1.54" fill="#858585"/><rect x="360.9" y="337.65" width="11.05" height="3.5" fill="#c6c6c6"/><rect x="361.7" y="338.63" width="9.25" height="1.54" fill="#858585"/><rect x="372.35" y="333.5" width="1.1" height="7.6" fill="#5e5e5e"/><rect x="375.55" y="333.45" width="11.05" height="3.5" fill="#c6c6c6"/><rect x="376.35" y="334.43" width="9.25" height="1.54" fill="#858585"/><rect x="375.55" y="337.65" width="11.05" height="3.5" fill="#c6c6c6"/><rect x="376.35" y="338.63" width="9.25" height="1.54" fill="#858585"/><rect x="387" y="333.5" width="1.1" height="7.6" fill="#5e5e5e"/><rect x="389.6" y="333.1" width="3.5" height="8.4" fill="#7a7a7a"/><rect x="390.4" y="333.7" width="1.4" height="7.2" fill="#4c4c4c"/><rect x="326.4" y="343.5" width="71.8" height="17.5" fill="#4c4c4c"/><rect x="328.4" y="348.75" width="1" height="1.2" fill="#d8d8d8"/><rect x="395.6" y="348.75" width="1" height="1.2" fill="#d8d8d8"/><rect x="330.5" y="343.5" width="63.1" height="17.5" fill="#6b6b6b" stroke="#3a3a3a" stroke-width=".4"/><rect x="330.9" y="343.9" width="62.3" height="3.4" fill="#767676"/><rect x="331.7" y="344.6" width="1.8" height="1.8" fill="#2e2e2e"/><rect x="338" y="344.7" width="18.5" height="1.7" fill="#454545" rx=".85"/><rect x="367" y="344.7" width="23.5" height="1.7" fill="#454545" rx=".85"/><rect x="330.7" y="347.6" width="58.6" height="12.7" fill="#2a2a2a"/><rect x="331.6" y="347.95" width="11.05" height="3.53" fill="#c6c6c6"/><rect x="332.4" y="348.94" width="9.25" height="1.55" fill="#858585"/><rect x="331.6" y="352.18" width="11.05" height="3.53" fill="#c6c6c6"/><rect x="332.4" y="353.17" width="9.25" height="1.55" fill="#858585"/><rect x="331.6" y="356.42" width="11.05" height="3.53" fill="#c6c6c6"/><rect x="332.4" y="357.41" width="9.25" height="1.55" fill="#858585"/><rect x="343.05" y="348" width="1.1" height="11.9" fill="#5e5e5e"/><rect x="346.25" y="347.95" width="11.05" height="3.53" fill="#c6c6c6"/><rect x="347.05" y="348.94" width="9.25" height="1.55" fill="#858585"/><rect x="346.25" y="352.18" width="11.05" height="3.53" fill="#c6c6c6"/><rect x="347.05" y="353.17" width="9.25" height="1.55" fill="#858585"/><rect x="346.25" y="356.42" width="11.05" height="3.53" fill="#c6c6c6"/><rect x="347.05" y="357.41" width="9.25" height="1.55" fill="#858585"/><rect x="357.7" y="348" width="1.1" height="11.9" fill="#5e5e5e"/><rect x="360.9" y="347.95" width="11.05" height="3.53" fill="#c6c6c6"/><rect x="361.7" y="348.94" width="9.25" height="1.55" fill="#858585"/><rect x="360.9" y="352.18" width="11.05" height="3.53" fill="#c6c6c6"/><rect x="361.7" y="353.17" width="9.25" height="1.55" fill="#858585"/><rect x="360.9" y="356.42" width="11.05" height="3.53" fill="#c6c6c6"/><rect x="361.7" y="357.41" width="9.25" height="1.55" fill="#858585"/><rect x="372.35" y="348" width="1.1" height="11.9" fill="#5e5e5e"/><rect x="375.55" y="347.95" width="11.05" height="3.53" fill="#c6c6c6"/><rect x="376.35" y="348.94" width="9.25" height="1.55" fill="#858585"/><rect x="375.55" y="352.18" width="11.05" height="3.53" fill="#c6c6c6"/><rect x="376.35" y="353.17" width="9.25" height="1.55" fill="#858585"/><rect x="375.55" y="356.42" width="11.05" height="3.53" fill="#c6c6c6"/><rect x="376.35" y="357.41" width="9.25" height="1.55" fill="#858585"/><rect x="387" y="348" width="1.1" height="11.9" fill="#5e5e5e"/><rect x="389.6" y="347.6" width="3.5" height="12.7" fill="#7a7a7a"/><rect x="390.4" y="348.2" width="1.4" height="11.5" fill="#4c4c4c"/><rect x="326.9" y="362.2" width="69.3" height="19.4" fill="#e8e8e8" stroke="#6a6a6a" stroke-width=".5"/><rect x="328.2" y="363.4" width="32.65" height="17" fill="url(#gups)" stroke="#8a8a8a" stroke-width=".4"/><rect x="362.25" y="363.4" width="32.65" height="17" fill="url(#gups)" stroke="#8a8a8a" stroke-width=".4"/></g><g id="r2"><rect x="478.7" y="95.6" width="90.8" height="292.4" fill="#858585" stroke="#333" stroke-width=".9"/><rect x="485.7" y="102.1" width="77.3" height="279.4" fill="#4e4e4e"/><rect x="479.2" y="96.1" width="89.8" height="6.2" fill="url(#gcap)"/><rect x="479.2" y="96.1" width="6.6" height="6.2" fill="#a2a2a2"/><rect x="562.9" y="96.1" width="6.1" height="6.2" fill="#a6a6a6"/><path d="M479.2 96.4L569 96.4" stroke="#2e2e2e" stroke-width="0.9"/><path d="M485.9 102.3L562.7 102.3" stroke="#555" stroke-width="0.6"/><rect x="479.2" y="102.3" width="6.6" height="285.4" fill="#6a6a6a"/><rect x="479.8" y="103.9" width="5.7" height="4.6" fill="#e6e6e6" rx=".6"/><rect x="480.7" y="105.2" width="1.3" height="2" fill="#8a8a8a"/><rect x="482.6" y="105.2" width="1.5" height="2" fill="#9a9a9a"/><rect x="479.8" y="110.5" width="5.7" height="4.6" fill="#e6e6e6" rx=".6"/><rect x="480.7" y="111.8" width="1.3" height="2" fill="#8a8a8a"/><rect x="482.6" y="111.8" width="1.5" height="2" fill="#9a9a9a"/><rect x="479.8" y="117.1" width="5.7" height="4.6" fill="#e6e6e6" rx=".6"/><rect x="480.7" y="118.4" width="1.3" height="2" fill="#8a8a8a"/><rect x="482.6" y="118.4" width="1.5" height="2" fill="#9a9a9a"/><rect x="479.8" y="123.7" width="5.7" height="4.6" fill="#e6e6e6" rx=".6"/><rect x="480.7" y="125" width="1.3" height="2" fill="#8a8a8a"/><rect x="482.6" y="125" width="1.5" height="2" fill="#9a9a9a"/><rect x="479.8" y="130.3" width="5.7" height="4.6" fill="#e6e6e6" rx=".6"/><rect x="480.7" y="131.6" width="1.3" height="2" fill="#8a8a8a"/><rect x="482.6" y="131.6" width="1.5" height="2" fill="#9a9a9a"/><rect x="479.8" y="136.9" width="5.7" height="4.6" fill="#e6e6e6" rx=".6"/><rect x="480.7" y="138.2" width="1.3" height="2" fill="#8a8a8a"/><rect x="482.6" y="138.2" width="1.5" height="2" fill="#9a9a9a"/><rect x="479.8" y="143.5" width="5.7" height="4.6" fill="#e6e6e6" rx=".6"/><rect x="480.7" y="144.8" width="1.3" height="2" fill="#8a8a8a"/><rect x="482.6" y="144.8" width="1.5" height="2" fill="#9a9a9a"/><rect x="479.8" y="150.1" width="5.7" height="4.6" fill="#e6e6e6" rx=".6"/><rect x="480.7" y="151.4" width="1.3" height="2" fill="#8a8a8a"/><rect x="482.6" y="151.4" width="1.5" height="2" fill="#9a9a9a"/><rect x="479.8" y="156.7" width="5.7" height="4.6" fill="#e6e6e6" rx=".6"/><rect x="480.7" y="158" width="1.3" height="2" fill="#8a8a8a"/><rect x="482.6" y="158" width="1.5" height="2" fill="#9a9a9a"/><rect x="479.8" y="163.3" width="5.7" height="4.6" fill="#e6e6e6" rx=".6"/><rect x="480.7" y="164.6" width="1.3" height="2" fill="#8a8a8a"/><rect x="482.6" y="164.6" width="1.5" height="2" fill="#9a9a9a"/><rect x="479.8" y="169.9" width="5.7" height="4.6" fill="#e6e6e6" rx=".6"/><rect x="480.7" y="171.2" width="1.3" height="2" fill="#8a8a8a"/><rect x="482.6" y="171.2" width="1.5" height="2" fill="#9a9a9a"/><rect x="479.8" y="176.5" width="5.7" height="4.6" fill="#e6e6e6" rx=".6"/><rect x="480.7" y="177.8" width="1.3" height="2" fill="#8a8a8a"/><rect x="482.6" y="177.8" width="1.5" height="2" fill="#9a9a9a"/><rect x="479.8" y="183.1" width="5.7" height="4.6" fill="#e6e6e6" rx=".6"/><rect x="480.7" y="184.4" width="1.3" height="2" fill="#8a8a8a"/><rect x="482.6" y="184.4" width="1.5" height="2" fill="#9a9a9a"/><rect x="479.8" y="189.7" width="5.7" height="4.6" fill="#e6e6e6" rx=".6"/><rect x="480.7" y="191" width="1.3" height="2" fill="#8a8a8a"/><rect x="482.6" y="191" width="1.5" height="2" fill="#9a9a9a"/><rect x="479.8" y="196.3" width="5.7" height="4.6" fill="#e6e6e6" rx=".6"/><rect x="480.7" y="197.6" width="1.3" height="2" fill="#8a8a8a"/><rect x="482.6" y="197.6" width="1.5" height="2" fill="#9a9a9a"/><rect x="479.8" y="202.9" width="5.7" height="4.6" fill="#e6e6e6" rx=".6"/><rect x="480.7" y="204.2" width="1.3" height="2" fill="#8a8a8a"/><rect x="482.6" y="204.2" width="1.5" height="2" fill="#9a9a9a"/><rect x="479.8" y="209.5" width="5.7" height="4.6" fill="#e6e6e6" rx=".6"/><rect x="480.7" y="210.8" width="1.3" height="2" fill="#8a8a8a"/><rect x="482.6" y="210.8" width="1.5" height="2" fill="#9a9a9a"/><rect x="479.8" y="216.1" width="5.7" height="4.6" fill="#e6e6e6" rx=".6"/><rect x="480.7" y="217.4" width="1.3" height="2" fill="#8a8a8a"/><rect x="482.6" y="217.4" width="1.5" height="2" fill="#9a9a9a"/><rect x="479.8" y="222.7" width="5.7" height="4.6" fill="#e6e6e6" rx=".6"/><rect x="480.7" y="224" width="1.3" height="2" fill="#8a8a8a"/><rect x="482.6" y="224" width="1.5" height="2" fill="#9a9a9a"/><rect x="479.8" y="229.3" width="5.7" height="4.6" fill="#e6e6e6" rx=".6"/><rect x="480.7" y="230.6" width="1.3" height="2" fill="#8a8a8a"/><rect x="482.6" y="230.6" width="1.5" height="2" fill="#9a9a9a"/><rect x="479.8" y="235.9" width="5.7" height="4.6" fill="#e6e6e6" rx=".6"/><rect x="480.7" y="237.2" width="1.3" height="2" fill="#8a8a8a"/><rect x="482.6" y="237.2" width="1.5" height="2" fill="#9a9a9a"/><rect x="479.8" y="242.5" width="5.7" height="4.6" fill="#e6e6e6" rx=".6"/><rect x="480.7" y="243.8" width="1.3" height="2" fill="#8a8a8a"/><rect x="482.6" y="243.8" width="1.5" height="2" fill="#9a9a9a"/><rect x="479.8" y="249.1" width="5.7" height="4.6" fill="#e6e6e6" rx=".6"/><rect x="480.7" y="250.4" width="1.3" height="2" fill="#8a8a8a"/><rect x="482.6" y="250.4" width="1.5" height="2" fill="#9a9a9a"/><rect x="479.8" y="255.7" width="5.7" height="4.6" fill="#e6e6e6" rx=".6"/><rect x="480.7" y="257" width="1.3" height="2" fill="#8a8a8a"/><rect x="482.6" y="257" width="1.5" height="2" fill="#9a9a9a"/><rect x="479.8" y="262.3" width="5.7" height="4.6" fill="#e6e6e6" rx=".6"/><rect x="480.7" y="263.6" width="1.3" height="2" fill="#8a8a8a"/><rect x="482.6" y="263.6" width="1.5" height="2" fill="#9a9a9a"/><rect x="479.8" y="268.9" width="5.7" height="4.6" fill="#e6e6e6" rx=".6"/><rect x="480.7" y="270.2" width="1.3" height="2" fill="#8a8a8a"/><rect x="482.6" y="270.2" width="1.5" height="2" fill="#9a9a9a"/><rect x="479.8" y="275.5" width="5.7" height="4.6" fill="#e6e6e6" rx=".6"/><rect x="480.7" y="276.8" width="1.3" height="2" fill="#8a8a8a"/><rect x="482.6" y="276.8" width="1.5" height="2" fill="#9a9a9a"/><rect x="479.8" y="282.1" width="5.7" height="4.6" fill="#e6e6e6" rx=".6"/><rect x="480.7" y="283.4" width="1.3" height="2" fill="#8a8a8a"/><rect x="482.6" y="283.4" width="1.5" height="2" fill="#9a9a9a"/><rect x="479.8" y="288.7" width="5.7" height="4.6" fill="#e6e6e6" rx=".6"/><rect x="480.7" y="290" width="1.3" height="2" fill="#8a8a8a"/><rect x="482.6" y="290" width="1.5" height="2" fill="#9a9a9a"/><rect x="479.8" y="295.3" width="5.7" height="4.6" fill="#e6e6e6" rx=".6"/><rect x="480.7" y="296.6" width="1.3" height="2" fill="#8a8a8a"/><rect x="482.6" y="296.6" width="1.5" height="2" fill="#9a9a9a"/><rect x="479.8" y="301.9" width="5.7" height="4.6" fill="#e6e6e6" rx=".6"/><rect x="480.7" y="303.2" width="1.3" height="2" fill="#8a8a8a"/><rect x="482.6" y="303.2" width="1.5" height="2" fill="#9a9a9a"/><rect x="479.8" y="308.5" width="5.7" height="4.6" fill="#e6e6e6" rx=".6"/><rect x="480.7" y="309.8" width="1.3" height="2" fill="#8a8a8a"/><rect x="482.6" y="309.8" width="1.5" height="2" fill="#9a9a9a"/><rect x="479.8" y="315.1" width="5.7" height="4.6" fill="#e6e6e6" rx=".6"/><rect x="480.7" y="316.4" width="1.3" height="2" fill="#8a8a8a"/><rect x="482.6" y="316.4" width="1.5" height="2" fill="#9a9a9a"/><rect x="479.8" y="321.7" width="5.7" height="4.6" fill="#e6e6e6" rx=".6"/><rect x="480.7" y="323" width="1.3" height="2" fill="#8a8a8a"/><rect x="482.6" y="323" width="1.5" height="2" fill="#9a9a9a"/><rect x="479.8" y="328.3" width="5.7" height="4.6" fill="#e6e6e6" rx=".6"/><rect x="480.7" y="329.6" width="1.3" height="2" fill="#8a8a8a"/><rect x="482.6" y="329.6" width="1.5" height="2" fill="#9a9a9a"/><rect x="479.8" y="334.9" width="5.7" height="4.6" fill="#e6e6e6" rx=".6"/><rect x="480.7" y="336.2" width="1.3" height="2" fill="#8a8a8a"/><rect x="482.6" y="336.2" width="1.5" height="2" fill="#9a9a9a"/><rect x="479.8" y="341.5" width="5.7" height="4.6" fill="#e6e6e6" rx=".6"/><rect x="480.7" y="342.8" width="1.3" height="2" fill="#8a8a8a"/><rect x="482.6" y="342.8" width="1.5" height="2" fill="#9a9a9a"/><rect x="479.8" y="348.1" width="5.7" height="4.6" fill="#e6e6e6" rx=".6"/><rect x="480.7" y="349.4" width="1.3" height="2" fill="#8a8a8a"/><rect x="482.6" y="349.4" width="1.5" height="2" fill="#9a9a9a"/><rect x="479.8" y="354.7" width="5.7" height="4.6" fill="#e6e6e6" rx=".6"/><rect x="480.7" y="356" width="1.3" height="2" fill="#8a8a8a"/><rect x="482.6" y="356" width="1.5" height="2" fill="#9a9a9a"/><rect x="479.8" y="361.3" width="5.7" height="4.6" fill="#e6e6e6" rx=".6"/><rect x="480.7" y="362.6" width="1.3" height="2" fill="#8a8a8a"/><rect x="482.6" y="362.6" width="1.5" height="2" fill="#9a9a9a"/><rect x="479.8" y="367.9" width="5.7" height="4.6" fill="#e6e6e6" rx=".6"/><rect x="480.7" y="369.2" width="1.3" height="2" fill="#8a8a8a"/><rect x="482.6" y="369.2" width="1.5" height="2" fill="#9a9a9a"/><rect x="479.8" y="374.5" width="5.7" height="4.6" fill="#e6e6e6" rx=".6"/><rect x="480.7" y="375.8" width="1.3" height="2" fill="#8a8a8a"/><rect x="482.6" y="375.8" width="1.5" height="2" fill="#9a9a9a"/><path d="M485.9 96.1L485.9 388" stroke="#363636" stroke-width="0.8"/><path d="M487 103.6V380.5" stroke="#e6e6e6" stroke-width=".8" stroke-dasharray="5.400 1.200"/><rect x="559.9" y="102.3" width="3" height="279.4" fill="#555"/><path d="M560.9 103.6V380" stroke="#bdbdbd" stroke-width=".7" stroke-dasharray=".8 1.400"/><rect x="562.8" y="102.3" width="6.2" height="285.4" fill="url(#grail)"/><path d="M562.6 96.1L562.6 388" stroke="#4a4a4a" stroke-width="0.7"/><rect x="479.2" y="381.5" width="89.8" height="6.5" fill="#8d8d8d"/><rect x="486.2" y="381.7" width="76.3" height="1.4" fill="#bababa"/><rect x="486.2" y="383.1" width="76.3" height="3.8" fill="#999" stroke="#666" stroke-width=".4"/><path d="M479.2 381.5L569 381.5" stroke="#4a4a4a" stroke-width="0.6"/><rect x="478.4" y="387.8" width="91.4" height="5" fill="url(#gbase)" rx=".8"/><rect x="478.4" y="392.2" width="7" height="2" fill="#141414"/><rect x="562.8" y="392.2" width="7" height="2" fill="#141414"/><rect x="488.7" y="102" width="71.8" height="6.4" fill="#e4e4e4" stroke="#8a8a8a" stroke-width=".4"/><rect x="491.7" y="103.2" width="2.1" height="3.8" fill="#3f3f3f" rx=".5"/><rect x="494.75" y="103.2" width="2.1" height="3.8" fill="#3f3f3f" rx=".5"/><rect x="497.8" y="103.2" width="2.1" height="3.8" fill="#3f3f3f" rx=".5"/><rect x="500.85" y="103.2" width="2.1" height="3.8" fill="#3f3f3f" rx=".5"/><rect x="503.9" y="103.2" width="2.1" height="3.8" fill="#3f3f3f" rx=".5"/><rect x="506.95" y="103.2" width="2.1" height="3.8" fill="#3f3f3f" rx=".5"/><rect x="510" y="103.2" width="2.1" height="3.8" fill="#3f3f3f" rx=".5"/><rect x="513.05" y="103.2" width="2.1" height="3.8" fill="#3f3f3f" rx=".5"/><rect x="516.1" y="103.2" width="2.1" height="3.8" fill="#3f3f3f" rx=".5"/><rect x="519.15" y="103.2" width="2.1" height="3.8" fill="#3f3f3f" rx=".5"/><rect x="522.2" y="103.2" width="2.1" height="3.8" fill="#3f3f3f" rx=".5"/><rect x="525.25" y="103.2" width="2.1" height="3.8" fill="#3f3f3f" rx=".5"/><rect x="528.3" y="103.2" width="2.1" height="3.8" fill="#3f3f3f" rx=".5"/><rect x="531.35" y="103.2" width="2.1" height="3.8" fill="#3f3f3f" rx=".5"/><rect x="534.4" y="103.2" width="2.1" height="3.8" fill="#3f3f3f" rx=".5"/><rect x="537.45" y="103.2" width="2.1" height="3.8" fill="#3f3f3f" rx=".5"/><rect x="542.4" y="103" width="16.1" height="4.4" fill="#cfcfcf"/><path d="M543.4 103.3L543.4 107.1" stroke="#9d9d9d" stroke-width="0.5"/><path d="M545.4 103.3L545.4 107.1" stroke="#9d9d9d" stroke-width="0.5"/><path d="M547.4 103.3L547.4 107.1" stroke="#9d9d9d" stroke-width="0.5"/><path d="M549.4 103.3L549.4 107.1" stroke="#9d9d9d" stroke-width="0.5"/><path d="M551.4 103.3L551.4 107.1" stroke="#9d9d9d" stroke-width="0.5"/><path d="M553.4 103.3L553.4 107.1" stroke="#9d9d9d" stroke-width="0.5"/><path d="M555.4 103.3L555.4 107.1" stroke="#9d9d9d" stroke-width="0.5"/><path d="M557.4 103.3L557.4 107.1" stroke="#9d9d9d" stroke-width="0.5"/><rect x="488.7" y="109.4" width="71.8" height="5.8" fill="#484848" stroke="#333" stroke-width=".4"/><circle cx="492.7" cy="112.3" r="1.700" fill="#7d7d7d" stroke="#bbb" stroke-width=".4"/><rect x="497.7" y="111.2" width="2" height="1.6" fill="#3d7ad8"/><rect x="501.2" y="111.2" width="2" height="1.6" fill="#dfdfdf"/><rect x="504.7" y="111.2" width="2" height="1.6" fill="#3d7ad8"/><rect x="508.2" y="110.8" width="3" height="1.6" fill="#e2b33c"/><rect x="514.7" y="111" width="1.1" height="2.6" fill="#c9c9c9"/><rect x="516.6" y="111" width="1.1" height="2.6" fill="#c9c9c9"/><rect x="518.5" y="111" width="1.1" height="2.6" fill="#c9c9c9"/><rect x="520.4" y="111" width="1.1" height="2.6" fill="#c9c9c9"/><rect x="522.3" y="111" width="1.1" height="2.6" fill="#c9c9c9"/><rect x="524.2" y="111" width="1.1" height="2.6" fill="#c9c9c9"/><rect x="526.1" y="111" width="1.1" height="2.6" fill="#c9c9c9"/><rect x="528" y="111" width="1.1" height="2.6" fill="#c9c9c9"/><rect x="529.9" y="111" width="1.1" height="2.6" fill="#c9c9c9"/><rect x="531.8" y="111" width="1.1" height="2.6" fill="#c9c9c9"/><rect x="533.7" y="111" width="1.1" height="2.6" fill="#c9c9c9"/><rect x="535.6" y="111" width="1.1" height="2.6" fill="#c9c9c9"/><rect x="537.5" y="111" width="1.1" height="2.6" fill="#c9c9c9"/><rect x="539.4" y="111" width="1.1" height="2.6" fill="#c9c9c9"/><rect x="541.3" y="111" width="1.1" height="2.6" fill="#c9c9c9"/><rect x="543.2" y="111" width="1.1" height="2.6" fill="#c9c9c9"/><rect x="545.1" y="111" width="1.1" height="2.6" fill="#c9c9c9"/><rect x="547" y="111" width="1.1" height="2.6" fill="#c9c9c9"/><rect x="548.9" y="111" width="1.1" height="2.6" fill="#c9c9c9"/><rect x="550.8" y="111" width="1.1" height="2.6" fill="#c9c9c9"/><rect x="552.7" y="111" width="1.1" height="2.6" fill="#c9c9c9"/><rect x="554.6" y="111" width="1.1" height="2.6" fill="#c9c9c9"/><rect x="556.5" y="111" width="1.1" height="2.6" fill="#c9c9c9"/><rect x="488.7" y="116.8" width="71.8" height="5" fill="#5c5c5c" stroke="#444" stroke-width=".4"/><rect x="491.2" y="118.1" width="19.6" height="2.4" fill="#3e3e3e" stroke="#8a8a8a" stroke-width=".4"/><rect x="512.8" y="118.1" width="19.6" height="2.4" fill="#3e3e3e" stroke="#8a8a8a" stroke-width=".4"/><rect x="534.4" y="118.1" width="19.6" height="2.4" fill="#3e3e3e" stroke="#8a8a8a" stroke-width=".4"/><rect x="554.5" y="117.8" width="1.2" height="3" fill="#ddd"/><rect x="556.9" y="117.8" width="1.2" height="3" fill="#ddd"/><rect x="489.7" y="122.6" width="69.8" height="18.9" fill="#484848"/><rect x="488.7" y="143" width="71.8" height="13" fill="#4c4c4c"/><rect x="490.7" y="146.9" width="1" height="1.2" fill="#d8d8d8"/><rect x="557.9" y="146.9" width="1" height="1.2" fill="#d8d8d8"/><rect x="492.8" y="143" width="63.1" height="13" fill="#6b6b6b" stroke="#3a3a3a" stroke-width=".4"/><rect x="493.2" y="143.4" width="62.3" height="3.4" fill="#767676"/><rect x="494" y="144.1" width="1.8" height="1.8" fill="#2e2e2e"/><rect x="500.3" y="144.2" width="18.5" height="1.7" fill="#454545" rx=".85"/><rect x="529.3" y="144.2" width="23.5" height="1.7" fill="#454545" rx=".85"/><rect x="493" y="147.1" width="58.6" height="8.2" fill="#2a2a2a"/><rect x="493.9" y="147.45" width="11.05" height="3.4" fill="#c6c6c6"/><rect x="494.7" y="148.4" width="9.25" height="1.5" fill="#858585"/><rect x="493.9" y="151.55" width="11.05" height="3.4" fill="#c6c6c6"/><rect x="494.7" y="152.5" width="9.25" height="1.5" fill="#858585"/><rect x="505.35" y="147.5" width="1.1" height="7.4" fill="#5e5e5e"/><rect x="508.55" y="147.45" width="11.05" height="3.4" fill="#c6c6c6"/><rect x="509.35" y="148.4" width="9.25" height="1.5" fill="#858585"/><rect x="508.55" y="151.55" width="11.05" height="3.4" fill="#c6c6c6"/><rect x="509.35" y="152.5" width="9.25" height="1.5" fill="#858585"/><rect x="520" y="147.5" width="1.1" height="7.4" fill="#5e5e5e"/><rect x="523.2" y="147.45" width="11.05" height="3.4" fill="#c6c6c6"/><rect x="524" y="148.4" width="9.25" height="1.5" fill="#858585"/><rect x="523.2" y="151.55" width="11.05" height="3.4" fill="#c6c6c6"/><rect x="524" y="152.5" width="9.25" height="1.5" fill="#858585"/><rect x="534.65" y="147.5" width="1.1" height="7.4" fill="#5e5e5e"/><rect x="537.85" y="147.45" width="11.05" height="3.4" fill="#c6c6c6"/><rect x="538.65" y="148.4" width="9.25" height="1.5" fill="#858585"/><rect x="537.85" y="151.55" width="11.05" height="3.4" fill="#c6c6c6"/><rect x="538.65" y="152.5" width="9.25" height="1.5" fill="#858585"/><rect x="549.3" y="147.5" width="1.1" height="7.4" fill="#5e5e5e"/><rect x="551.9" y="147.1" width="3.5" height="8.2" fill="#7a7a7a"/><rect x="552.7" y="147.7" width="1.4" height="7" fill="#4c4c4c"/><rect x="488.7" y="157.4" width="71.8" height="12.2" fill="#4c4c4c"/><rect x="490.7" y="161.06" width="1" height="1.2" fill="#d8d8d8"/><rect x="557.9" y="161.06" width="1" height="1.2" fill="#d8d8d8"/><rect x="492.8" y="157.4" width="63.1" height="12.2" fill="#6b6b6b" stroke="#3a3a3a" stroke-width=".4"/><rect x="493.2" y="157.8" width="62.3" height="3.4" fill="#767676"/><rect x="494" y="158.5" width="1.8" height="1.8" fill="#2e2e2e"/><rect x="500.3" y="158.6" width="18.5" height="1.7" fill="#454545" rx=".85"/><rect x="529.3" y="158.6" width="23.5" height="1.7" fill="#454545" rx=".85"/><rect x="493" y="161.5" width="58.6" height="7.4" fill="#2a2a2a"/><rect x="493.9" y="161.85" width="11.05" height="3" fill="#c6c6c6"/><rect x="494.7" y="162.69" width="9.25" height="1.32" fill="#858585"/><rect x="493.9" y="165.55" width="11.05" height="3" fill="#c6c6c6"/><rect x="494.7" y="166.39" width="9.25" height="1.32" fill="#858585"/><rect x="505.35" y="161.9" width="1.1" height="6.6" fill="#5e5e5e"/><rect x="508.55" y="161.85" width="11.05" height="3" fill="#c6c6c6"/><rect x="509.35" y="162.69" width="9.25" height="1.32" fill="#858585"/><rect x="508.55" y="165.55" width="11.05" height="3" fill="#c6c6c6"/><rect x="509.35" y="166.39" width="9.25" height="1.32" fill="#858585"/><rect x="520" y="161.9" width="1.1" height="6.6" fill="#5e5e5e"/><rect x="523.2" y="161.85" width="11.05" height="3" fill="#c6c6c6"/><rect x="524" y="162.69" width="9.25" height="1.32" fill="#858585"/><rect x="523.2" y="165.55" width="11.05" height="3" fill="#c6c6c6"/><rect x="524" y="166.39" width="9.25" height="1.32" fill="#858585"/><rect x="534.65" y="161.9" width="1.1" height="6.6" fill="#5e5e5e"/><rect x="537.85" y="161.85" width="11.05" height="3" fill="#c6c6c6"/><rect x="538.65" y="162.69" width="9.25" height="1.32" fill="#858585"/><rect x="537.85" y="165.55" width="11.05" height="3" fill="#c6c6c6"/><rect x="538.65" y="166.39" width="9.25" height="1.32" fill="#858585"/><rect x="549.3" y="161.9" width="1.1" height="6.6" fill="#5e5e5e"/><rect x="551.9" y="161.5" width="3.5" height="7.4" fill="#7a7a7a"/><rect x="552.7" y="162.1" width="1.4" height="6.2" fill="#4c4c4c"/><rect x="489.7" y="170" width="69.8" height="5.4" fill="#3a3a3a"/><rect x="487.7" y="175.8" width="73.8" height="6.8" fill="#efefef" rx="1.500" stroke="#7b7b7b" stroke-width=".4"/><rect x="491.7" y="177" width="4.2" height="4.4" fill="#f8f8f8" stroke="#555" stroke-width=".5"/><path d="M492.8 177.8L493.8 180.4" stroke="#333" stroke-width="0.6"/><path d="M494.8 177.8L493.8 180.4" stroke="#333" stroke-width="0.6"/><rect x="497.55" y="177" width="4.2" height="4.4" fill="#f8f8f8" stroke="#555" stroke-width=".5"/><path d="M498.65 177.8L499.65 180.4" stroke="#333" stroke-width="0.6"/><path d="M500.65 177.8L499.65 180.4" stroke="#333" stroke-width="0.6"/><rect x="503.4" y="177" width="4.2" height="4.4" fill="#f8f8f8" stroke="#555" stroke-width=".5"/><path d="M504.5 177.8L505.5 180.4" stroke="#333" stroke-width="0.6"/><path d="M506.5 177.8L505.5 180.4" stroke="#333" stroke-width="0.6"/><rect x="509.25" y="177" width="4.2" height="4.4" fill="#f8f8f8" stroke="#555" stroke-width=".5"/><path d="M510.35 177.8L511.35 180.4" stroke="#333" stroke-width="0.6"/><path d="M512.35 177.8L511.35 180.4" stroke="#333" stroke-width="0.6"/><rect x="515.1" y="177" width="4.2" height="4.4" fill="#f8f8f8" stroke="#555" stroke-width=".5"/><path d="M516.2 177.8L517.2 180.4" stroke="#333" stroke-width="0.6"/><path d="M518.2 177.8L517.2 180.4" stroke="#333" stroke-width="0.6"/><rect x="520.95" y="177" width="4.2" height="4.4" fill="#f8f8f8" stroke="#555" stroke-width=".5"/><path d="M522.05 177.8L523.05 180.4" stroke="#333" stroke-width="0.6"/><path d="M524.05 177.8L523.05 180.4" stroke="#333" stroke-width="0.6"/><rect x="526.8" y="177" width="4.2" height="4.4" fill="#f8f8f8" stroke="#555" stroke-width=".5"/><path d="M527.9 177.8L528.9 180.4" stroke="#333" stroke-width="0.6"/><path d="M529.9 177.8L528.9 180.4" stroke="#333" stroke-width="0.6"/><rect x="532.65" y="177" width="4.2" height="4.4" fill="#f8f8f8" stroke="#555" stroke-width=".5"/><path d="M533.75 177.8L534.75 180.4" stroke="#333" stroke-width="0.6"/><path d="M535.75 177.8L534.75 180.4" stroke="#333" stroke-width="0.6"/><rect x="538.5" y="177" width="4.2" height="4.4" fill="#f8f8f8" stroke="#555" stroke-width=".5"/><path d="M539.6 177.8L540.6 180.4" stroke="#333" stroke-width="0.6"/><path d="M541.6 177.8L540.6 180.4" stroke="#333" stroke-width="0.6"/><rect x="544.35" y="177" width="4.2" height="4.4" fill="#f8f8f8" stroke="#555" stroke-width=".5"/><path d="M545.45 177.8L546.45 180.4" stroke="#333" stroke-width="0.6"/><path d="M547.45 177.8L546.45 180.4" stroke="#333" stroke-width="0.6"/><rect x="551.5" y="177.6" width="5" height="3.2" fill="#d92a20" stroke="#7a1c16" stroke-width=".4"/><rect x="489.7" y="183.4" width="69.8" height="39" fill="#444"/><rect x="488.7" y="223.7" width="71.8" height="18.9" fill="#4c4c4c"/><rect x="490.7" y="229.37" width="1" height="1.2" fill="#d8d8d8"/><rect x="557.9" y="229.37" width="1" height="1.2" fill="#d8d8d8"/><rect x="492.8" y="223.7" width="63.1" height="18.9" fill="#6b6b6b" stroke="#3a3a3a" stroke-width=".4"/><rect x="493.2" y="224.1" width="62.3" height="3.4" fill="#767676"/><rect x="494" y="224.8" width="1.8" height="1.8" fill="#2e2e2e"/><rect x="500.3" y="224.9" width="18.5" height="1.7" fill="#454545" rx=".85"/><rect x="529.3" y="224.9" width="23.5" height="1.7" fill="#454545" rx=".85"/><rect x="493" y="227.8" width="58.6" height="14.1" fill="#2a2a2a"/><rect x="493.9" y="228.15" width="11.05" height="4" fill="#c6c6c6"/><rect x="494.7" y="229.27" width="9.25" height="1.76" fill="#858585"/><rect x="493.9" y="232.85" width="11.05" height="4" fill="#c6c6c6"/><rect x="494.7" y="233.97" width="9.25" height="1.76" fill="#858585"/><rect x="493.9" y="237.55" width="11.05" height="4" fill="#c6c6c6"/><rect x="494.7" y="238.67" width="9.25" height="1.76" fill="#858585"/><rect x="505.35" y="228.2" width="1.1" height="13.3" fill="#5e5e5e"/><rect x="508.55" y="228.15" width="11.05" height="4" fill="#c6c6c6"/><rect x="509.35" y="229.27" width="9.25" height="1.76" fill="#858585"/><rect x="508.55" y="232.85" width="11.05" height="4" fill="#c6c6c6"/><rect x="509.35" y="233.97" width="9.25" height="1.76" fill="#858585"/><rect x="508.55" y="237.55" width="11.05" height="4" fill="#c6c6c6"/><rect x="509.35" y="238.67" width="9.25" height="1.76" fill="#858585"/><rect x="520" y="228.2" width="1.1" height="13.3" fill="#5e5e5e"/><rect x="523.2" y="228.15" width="11.05" height="4" fill="#c6c6c6"/><rect x="524" y="229.27" width="9.25" height="1.76" fill="#858585"/><rect x="523.2" y="232.85" width="11.05" height="4" fill="#c6c6c6"/><rect x="524" y="233.97" width="9.25" height="1.76" fill="#858585"/><rect x="523.2" y="237.55" width="11.05" height="4" fill="#c6c6c6"/><rect x="524" y="238.67" width="9.25" height="1.76" fill="#858585"/><rect x="534.65" y="228.2" width="1.1" height="13.3" fill="#5e5e5e"/><rect x="537.85" y="228.15" width="11.05" height="4" fill="#c6c6c6"/><rect x="538.65" y="229.27" width="9.25" height="1.76" fill="#858585"/><rect x="537.85" y="232.85" width="11.05" height="4" fill="#c6c6c6"/><rect x="538.65" y="233.97" width="9.25" height="1.76" fill="#858585"/><rect x="537.85" y="237.55" width="11.05" height="4" fill="#c6c6c6"/><rect x="538.65" y="238.67" width="9.25" height="1.76" fill="#858585"/><rect x="549.3" y="228.2" width="1.1" height="13.3" fill="#5e5e5e"/><rect x="551.9" y="227.8" width="3.5" height="14.1" fill="#7a7a7a"/><rect x="552.7" y="228.4" width="1.4" height="12.9" fill="#4c4c4c"/><rect x="488.7" y="244.4" width="71.8" height="17.5" fill="#4c4c4c"/><rect x="490.7" y="249.65" width="1" height="1.2" fill="#d8d8d8"/><rect x="557.9" y="249.65" width="1" height="1.2" fill="#d8d8d8"/><rect x="492.8" y="244.4" width="63.1" height="17.5" fill="#6b6b6b" stroke="#3a3a3a" stroke-width=".4"/><rect x="493.2" y="244.8" width="62.3" height="3.4" fill="#767676"/><rect x="494" y="245.5" width="1.8" height="1.8" fill="#2e2e2e"/><rect x="500.3" y="245.6" width="18.5" height="1.7" fill="#454545" rx=".85"/><rect x="529.3" y="245.6" width="23.5" height="1.7" fill="#454545" rx=".85"/><rect x="493" y="248.5" width="58.6" height="12.7" fill="#2a2a2a"/><rect x="493.9" y="248.85" width="11.05" height="3.53" fill="#c6c6c6"/><rect x="494.7" y="249.84" width="9.25" height="1.55" fill="#858585"/><rect x="493.9" y="253.08" width="11.05" height="3.53" fill="#c6c6c6"/><rect x="494.7" y="254.07" width="9.25" height="1.55" fill="#858585"/><rect x="493.9" y="257.32" width="11.05" height="3.53" fill="#c6c6c6"/><rect x="494.7" y="258.31" width="9.25" height="1.55" fill="#858585"/><rect x="505.35" y="248.9" width="1.1" height="11.9" fill="#5e5e5e"/><rect x="508.55" y="248.85" width="11.05" height="3.53" fill="#c6c6c6"/><rect x="509.35" y="249.84" width="9.25" height="1.55" fill="#858585"/><rect x="508.55" y="253.08" width="11.05" height="3.53" fill="#c6c6c6"/><rect x="509.35" y="254.07" width="9.25" height="1.55" fill="#858585"/><rect x="508.55" y="257.32" width="11.05" height="3.53" fill="#c6c6c6"/><rect x="509.35" y="258.31" width="9.25" height="1.55" fill="#858585"/><rect x="520" y="248.9" width="1.1" height="11.9" fill="#5e5e5e"/><rect x="523.2" y="248.85" width="11.05" height="3.53" fill="#c6c6c6"/><rect x="524" y="249.84" width="9.25" height="1.55" fill="#858585"/><rect x="523.2" y="253.08" width="11.05" height="3.53" fill="#c6c6c6"/><rect x="524" y="254.07" width="9.25" height="1.55" fill="#858585"/><rect x="523.2" y="257.32" width="11.05" height="3.53" fill="#c6c6c6"/><rect x="524" y="258.31" width="9.25" height="1.55" fill="#858585"/><rect x="534.65" y="248.9" width="1.1" height="11.9" fill="#5e5e5e"/><rect x="537.85" y="248.85" width="11.05" height="3.53" fill="#c6c6c6"/><rect x="538.65" y="249.84" width="9.25" height="1.55" fill="#858585"/><rect x="537.85" y="253.08" width="11.05" height="3.53" fill="#c6c6c6"/><rect x="538.65" y="254.07" width="9.25" height="1.55" fill="#858585"/><rect x="537.85" y="257.32" width="11.05" height="3.53" fill="#c6c6c6"/><rect x="538.65" y="258.31" width="9.25" height="1.55" fill="#858585"/><rect x="549.3" y="248.9" width="1.1" height="11.9" fill="#5e5e5e"/><rect x="551.9" y="248.5" width="3.5" height="12.7" fill="#7a7a7a"/><rect x="552.7" y="249.1" width="1.4" height="11.5" fill="#4c4c4c"/><rect x="487.7" y="262.8" width="73.8" height="11.2" fill="#141414"/><rect x="487.7" y="275.6" width="73.8" height="6.6" fill="#6d6d6d" stroke="#3c3c3c" stroke-width=".4"/><rect x="490.7" y="276.8" width="67.8" height="3.8" fill="#9a9a9a"/><path d="M491.7 278H557.5" stroke="#e4e4e4" stroke-width="1.200" stroke-dasharray=".9 .8"/><path d="M491.7 279.6H557.5" stroke="#3f3f3f" stroke-width="1.300" stroke-dasharray="1 .7"/><rect x="487.7" y="282.8" width="73.8" height="4.8" fill="#141414"/><rect x="487.7" y="288.7" width="73.8" height="6.9" fill="#6d6d6d" stroke="#3c3c3c" stroke-width=".4"/><rect x="491.7" y="290" width="14.85" height="4.3" fill="#b5b5b5" stroke="#4a4a4a" stroke-width=".4"/><path d="M492.7 292.35H505.15" stroke="#444" stroke-width="1.500" stroke-dasharray="1 .8"/><rect x="508.15" y="290" width="14.85" height="4.3" fill="#b5b5b5" stroke="#4a4a4a" stroke-width=".4"/><path d="M509.15 292.35H521.6" stroke="#444" stroke-width="1.500" stroke-dasharray="1 .8"/><rect x="524.6" y="290" width="14.85" height="4.3" fill="#b5b5b5" stroke="#4a4a4a" stroke-width=".4"/><path d="M525.6 292.35H538.05" stroke="#444" stroke-width="1.500" stroke-dasharray="1 .8"/><rect x="541.05" y="290" width="14.85" height="4.3" fill="#b5b5b5" stroke="#4a4a4a" stroke-width=".4"/><path d="M542.05 292.35H554.5" stroke="#444" stroke-width="1.500" stroke-dasharray="1 .8"/><rect x="487.7" y="296.2" width="73.8" height="4.4" fill="#141414"/><rect x="488.7" y="301.9" width="71.8" height="13.3" fill="#4c4c4c"/><rect x="493" y="301.9" width="62.5" height="13.3" fill="#2e2e2e" stroke="#222" stroke-width=".4"/><rect x="495.4" y="303" width="12.62" height="5.15" fill="#b2b2b2"/><rect x="496.4" y="304.54" width="10.62" height="2.06" fill="#5a5a5a"/><rect x="495.4" y="308.95" width="12.62" height="5.15" fill="#b2b2b2"/><rect x="496.4" y="310.49" width="10.62" height="2.06" fill="#5a5a5a"/><rect x="510.42" y="303" width="12.62" height="5.15" fill="#b2b2b2"/><rect x="511.42" y="304.54" width="10.62" height="2.06" fill="#5a5a5a"/><rect x="510.42" y="308.95" width="12.62" height="5.15" fill="#b2b2b2"/><rect x="511.42" y="310.49" width="10.62" height="2.06" fill="#5a5a5a"/><rect x="525.45" y="303" width="12.62" height="5.15" fill="#b2b2b2"/><rect x="526.45" y="304.54" width="10.62" height="2.06" fill="#5a5a5a"/><rect x="525.45" y="308.95" width="12.62" height="5.15" fill="#b2b2b2"/><rect x="526.45" y="310.49" width="10.62" height="2.06" fill="#5a5a5a"/><rect x="540.48" y="303" width="12.62" height="5.15" fill="#b2b2b2"/><rect x="541.48" y="304.54" width="10.62" height="2.06" fill="#5a5a5a"/><rect x="540.48" y="308.95" width="12.62" height="5.15" fill="#b2b2b2"/><rect x="541.48" y="310.49" width="10.62" height="2.06" fill="#5a5a5a"/><rect x="487.7" y="315.8" width="73.8" height="5.6" fill="#141414"/><rect x="489.7" y="322.5" width="69.8" height="18.8" fill="#2d2d2d" stroke="#1d1d1d" stroke-width=".4"/><rect x="491.9" y="323.75" width="15.3" height="3.4" fill="#b6b6b6" rx="1"/><rect x="493.3" y="324.65" width="9.2" height="1.6" fill="#5a5a5a" rx=".6"/><rect x="503.3" y="324.15" width="3.5" height="2.6" fill="#2c2c2c"/><rect x="491.9" y="328.05" width="15.3" height="3.4" fill="#b6b6b6" rx="1"/><rect x="493.3" y="328.95" width="9.2" height="1.6" fill="#5a5a5a" rx=".6"/><rect x="503.3" y="328.45" width="3.5" height="2.6" fill="#2c2c2c"/><rect x="491.9" y="332.35" width="15.3" height="3.4" fill="#b6b6b6" rx="1"/><rect x="493.3" y="333.25" width="9.2" height="1.6" fill="#5a5a5a" rx=".6"/><rect x="503.3" y="332.75" width="3.5" height="2.6" fill="#2c2c2c"/><rect x="491.9" y="336.65" width="15.3" height="3.4" fill="#b6b6b6" rx="1"/><rect x="493.3" y="337.55" width="9.2" height="1.6" fill="#5a5a5a" rx=".6"/><rect x="503.3" y="337.05" width="3.5" height="2.6" fill="#2c2c2c"/><rect x="508.6" y="323.75" width="15.3" height="3.4" fill="#b6b6b6" rx="1"/><rect x="510" y="324.65" width="9.2" height="1.6" fill="#5a5a5a" rx=".6"/><rect x="520" y="324.15" width="3.5" height="2.6" fill="#2c2c2c"/><rect x="508.6" y="328.05" width="15.3" height="3.4" fill="#b6b6b6" rx="1"/><rect x="510" y="328.95" width="9.2" height="1.6" fill="#5a5a5a" rx=".6"/><rect x="520" y="328.45" width="3.5" height="2.6" fill="#2c2c2c"/><rect x="508.6" y="332.35" width="15.3" height="3.4" fill="#b6b6b6" rx="1"/><rect x="510" y="333.25" width="9.2" height="1.6" fill="#5a5a5a" rx=".6"/><rect x="520" y="332.75" width="3.5" height="2.6" fill="#2c2c2c"/><rect x="508.6" y="336.65" width="15.3" height="3.4" fill="#b6b6b6" rx="1"/><rect x="510" y="337.55" width="9.2" height="1.6" fill="#5a5a5a" rx=".6"/><rect x="520" y="337.05" width="3.5" height="2.6" fill="#2c2c2c"/><rect x="525.3" y="323.75" width="15.3" height="3.4" fill="#b6b6b6" rx="1"/><rect x="526.7" y="324.65" width="9.2" height="1.6" fill="#5a5a5a" rx=".6"/><rect x="536.7" y="324.15" width="3.5" height="2.6" fill="#2c2c2c"/><rect x="525.3" y="328.05" width="15.3" height="3.4" fill="#b6b6b6" rx="1"/><rect x="526.7" y="328.95" width="9.2" height="1.6" fill="#5a5a5a" rx=".6"/><rect x="536.7" y="328.45" width="3.5" height="2.6" fill="#2c2c2c"/><rect x="525.3" y="332.35" width="15.3" height="3.4" fill="#b6b6b6" rx="1"/><rect x="526.7" y="333.25" width="9.2" height="1.6" fill="#5a5a5a" rx=".6"/><rect x="536.7" y="332.75" width="3.5" height="2.6" fill="#2c2c2c"/><rect x="525.3" y="336.65" width="15.3" height="3.4" fill="#b6b6b6" rx="1"/><rect x="526.7" y="337.55" width="9.2" height="1.6" fill="#5a5a5a" rx=".6"/><rect x="536.7" y="337.05" width="3.5" height="2.6" fill="#2c2c2c"/><rect x="542" y="323.75" width="15.3" height="3.4" fill="#1f1f1f"/><rect x="546.3" y="324.25" width="9.5" height="2.1" fill="#53c3e6"/><rect x="542" y="328.05" width="15.3" height="3.4" fill="#b6b6b6" rx="1"/><rect x="543.4" y="328.95" width="9.2" height="1.6" fill="#5a5a5a" rx=".6"/><rect x="553.4" y="328.45" width="3.5" height="2.6" fill="#2c2c2c"/><rect x="542" y="332.35" width="15.3" height="3.4" fill="#b6b6b6" rx="1"/><rect x="543.4" y="333.25" width="9.2" height="1.6" fill="#5a5a5a" rx=".6"/><rect x="553.4" y="332.75" width="3.5" height="2.6" fill="#2c2c2c"/><rect x="542" y="336.65" width="15.3" height="3.4" fill="#b6b6b6" rx="1"/><rect x="543.4" y="337.55" width="9.2" height="1.6" fill="#5a5a5a" rx=".6"/><rect x="553.4" y="337.05" width="3.5" height="2.6" fill="#2c2c2c"/><rect x="487.7" y="342.6" width="73.8" height="17.8" fill="#141414"/><rect x="487.7" y="361.9" width="71.8" height="19.7" fill="#e8e8e8" stroke="#6a6a6a" stroke-width=".5"/><rect x="489" y="363.1" width="33.9" height="17.3" fill="url(#gups)" stroke="#8a8a8a" stroke-width=".4"/><rect x="524.3" y="363.1" width="33.9" height="17.3" fill="url(#gups)" stroke="#8a8a8a" stroke-width=".4"/></g><g id="r3"><rect x="369.3" y="431.5" width="90.4" height="239.7" fill="#858585" stroke="#333" stroke-width=".9"/><rect x="376.3" y="438" width="76.9" height="226.7" fill="#4e4e4e"/><rect x="369.8" y="432" width="89.4" height="6.2" fill="url(#gcap)"/><rect x="369.8" y="432" width="6.6" height="6.2" fill="#a2a2a2"/><rect x="453.1" y="432" width="6.1" height="6.2" fill="#a6a6a6"/><path d="M369.8 432.3L459.2 432.3" stroke="#2e2e2e" stroke-width="0.9"/><path d="M376.5 438.2L452.9 438.2" stroke="#555" stroke-width="0.6"/><rect x="369.8" y="438.2" width="6.6" height="232.7" fill="#6a6a6a"/><rect x="370.4" y="439.8" width="5.7" height="4.6" fill="#e6e6e6" rx=".6"/><rect x="371.3" y="441.1" width="1.3" height="2" fill="#8a8a8a"/><rect x="373.2" y="441.1" width="1.5" height="2" fill="#9a9a9a"/><rect x="370.4" y="446.4" width="5.7" height="4.6" fill="#e6e6e6" rx=".6"/><rect x="371.3" y="447.7" width="1.3" height="2" fill="#8a8a8a"/><rect x="373.2" y="447.7" width="1.5" height="2" fill="#9a9a9a"/><rect x="370.4" y="453" width="5.7" height="4.6" fill="#e6e6e6" rx=".6"/><rect x="371.3" y="454.3" width="1.3" height="2" fill="#8a8a8a"/><rect x="373.2" y="454.3" width="1.5" height="2" fill="#9a9a9a"/><rect x="370.4" y="459.6" width="5.7" height="4.6" fill="#e6e6e6" rx=".6"/><rect x="371.3" y="460.9" width="1.3" height="2" fill="#8a8a8a"/><rect x="373.2" y="460.9" width="1.5" height="2" fill="#9a9a9a"/><rect x="370.4" y="466.2" width="5.7" height="4.6" fill="#e6e6e6" rx=".6"/><rect x="371.3" y="467.5" width="1.3" height="2" fill="#8a8a8a"/><rect x="373.2" y="467.5" width="1.5" height="2" fill="#9a9a9a"/><rect x="370.4" y="472.8" width="5.7" height="4.6" fill="#e6e6e6" rx=".6"/><rect x="371.3" y="474.1" width="1.3" height="2" fill="#8a8a8a"/><rect x="373.2" y="474.1" width="1.5" height="2" fill="#9a9a9a"/><rect x="370.4" y="479.4" width="5.7" height="4.6" fill="#e6e6e6" rx=".6"/><rect x="371.3" y="480.7" width="1.3" height="2" fill="#8a8a8a"/><rect x="373.2" y="480.7" width="1.5" height="2" fill="#9a9a9a"/><rect x="370.4" y="486" width="5.7" height="4.6" fill="#e6e6e6" rx=".6"/><rect x="371.3" y="487.3" width="1.3" height="2" fill="#8a8a8a"/><rect x="373.2" y="487.3" width="1.5" height="2" fill="#9a9a9a"/><rect x="370.4" y="492.6" width="5.7" height="4.6" fill="#e6e6e6" rx=".6"/><rect x="371.3" y="493.9" width="1.3" height="2" fill="#8a8a8a"/><rect x="373.2" y="493.9" width="1.5" height="2" fill="#9a9a9a"/><rect x="370.4" y="499.2" width="5.7" height="4.6" fill="#e6e6e6" rx=".6"/><rect x="371.3" y="500.5" width="1.3" height="2" fill="#8a8a8a"/><rect x="373.2" y="500.5" width="1.5" height="2" fill="#9a9a9a"/><rect x="370.4" y="505.8" width="5.7" height="4.6" fill="#e6e6e6" rx=".6"/><rect x="371.3" y="507.1" width="1.3" height="2" fill="#8a8a8a"/><rect x="373.2" y="507.1" width="1.5" height="2" fill="#9a9a9a"/><rect x="370.4" y="512.4" width="5.7" height="4.6" fill="#e6e6e6" rx=".6"/><rect x="371.3" y="513.7" width="1.3" height="2" fill="#8a8a8a"/><rect x="373.2" y="513.7" width="1.5" height="2" fill="#9a9a9a"/><rect x="370.4" y="519" width="5.7" height="4.6" fill="#e6e6e6" rx=".6"/><rect x="371.3" y="520.3" width="1.3" height="2" fill="#8a8a8a"/><rect x="373.2" y="520.3" width="1.5" height="2" fill="#9a9a9a"/><rect x="370.4" y="525.6" width="5.7" height="4.6" fill="#e6e6e6" rx=".6"/><rect x="371.3" y="526.9" width="1.3" height="2" fill="#8a8a8a"/><rect x="373.2" y="526.9" width="1.5" height="2" fill="#9a9a9a"/><rect x="370.4" y="532.2" width="5.7" height="4.6" fill="#e6e6e6" rx=".6"/><rect x="371.3" y="533.5" width="1.3" height="2" fill="#8a8a8a"/><rect x="373.2" y="533.5" width="1.5" height="2" fill="#9a9a9a"/><rect x="370.4" y="538.8" width="5.7" height="4.6" fill="#e6e6e6" rx=".6"/><rect x="371.3" y="540.1" width="1.3" height="2" fill="#8a8a8a"/><rect x="373.2" y="540.1" width="1.5" height="2" fill="#9a9a9a"/><rect x="370.4" y="545.4" width="5.7" height="4.6" fill="#e6e6e6" rx=".6"/><rect x="371.3" y="546.7" width="1.3" height="2" fill="#8a8a8a"/><rect x="373.2" y="546.7" width="1.5" height="2" fill="#9a9a9a"/><rect x="370.4" y="552" width="5.7" height="4.6" fill="#e6e6e6" rx=".6"/><rect x="371.3" y="553.3" width="1.3" height="2" fill="#8a8a8a"/><rect x="373.2" y="553.3" width="1.5" height="2" fill="#9a9a9a"/><rect x="370.4" y="558.6" width="5.7" height="4.6" fill="#e6e6e6" rx=".6"/><rect x="371.3" y="559.9" width="1.3" height="2" fill="#8a8a8a"/><rect x="373.2" y="559.9" width="1.5" height="2" fill="#9a9a9a"/><rect x="370.4" y="565.2" width="5.7" height="4.6" fill="#e6e6e6" rx=".6"/><rect x="371.3" y="566.5" width="1.3" height="2" fill="#8a8a8a"/><rect x="373.2" y="566.5" width="1.5" height="2" fill="#9a9a9a"/><rect x="370.4" y="571.8" width="5.7" height="4.6" fill="#e6e6e6" rx=".6"/><rect x="371.3" y="573.1" width="1.3" height="2" fill="#8a8a8a"/><rect x="373.2" y="573.1" width="1.5" height="2" fill="#9a9a9a"/><rect x="370.4" y="578.4" width="5.7" height="4.6" fill="#e6e6e6" rx=".6"/><rect x="371.3" y="579.7" width="1.3" height="2" fill="#8a8a8a"/><rect x="373.2" y="579.7" width="1.5" height="2" fill="#9a9a9a"/><rect x="370.4" y="585" width="5.7" height="4.6" fill="#e6e6e6" rx=".6"/><rect x="371.3" y="586.3" width="1.3" height="2" fill="#8a8a8a"/><rect x="373.2" y="586.3" width="1.5" height="2" fill="#9a9a9a"/><rect x="370.4" y="591.6" width="5.7" height="4.6" fill="#e6e6e6" rx=".6"/><rect x="371.3" y="592.9" width="1.3" height="2" fill="#8a8a8a"/><rect x="373.2" y="592.9" width="1.5" height="2" fill="#9a9a9a"/><rect x="370.4" y="598.2" width="5.7" height="4.6" fill="#e6e6e6" rx=".6"/><rect x="371.3" y="599.5" width="1.3" height="2" fill="#8a8a8a"/><rect x="373.2" y="599.5" width="1.5" height="2" fill="#9a9a9a"/><rect x="370.4" y="604.8" width="5.7" height="4.6" fill="#e6e6e6" rx=".6"/><rect x="371.3" y="606.1" width="1.3" height="2" fill="#8a8a8a"/><rect x="373.2" y="606.1" width="1.5" height="2" fill="#9a9a9a"/><rect x="370.4" y="611.4" width="5.7" height="4.6" fill="#e6e6e6" rx=".6"/><rect x="371.3" y="612.7" width="1.3" height="2" fill="#8a8a8a"/><rect x="373.2" y="612.7" width="1.5" height="2" fill="#9a9a9a"/><rect x="370.4" y="618" width="5.7" height="4.6" fill="#e6e6e6" rx=".6"/><rect x="371.3" y="619.3" width="1.3" height="2" fill="#8a8a8a"/><rect x="373.2" y="619.3" width="1.5" height="2" fill="#9a9a9a"/><rect x="370.4" y="624.6" width="5.7" height="4.6" fill="#e6e6e6" rx=".6"/><rect x="371.3" y="625.9" width="1.3" height="2" fill="#8a8a8a"/><rect x="373.2" y="625.9" width="1.5" height="2" fill="#9a9a9a"/><rect x="370.4" y="631.2" width="5.7" height="4.6" fill="#e6e6e6" rx=".6"/><rect x="371.3" y="632.5" width="1.3" height="2" fill="#8a8a8a"/><rect x="373.2" y="632.5" width="1.5" height="2" fill="#9a9a9a"/><rect x="370.4" y="637.8" width="5.7" height="4.6" fill="#e6e6e6" rx=".6"/><rect x="371.3" y="639.1" width="1.3" height="2" fill="#8a8a8a"/><rect x="373.2" y="639.1" width="1.5" height="2" fill="#9a9a9a"/><rect x="370.4" y="644.4" width="5.7" height="4.6" fill="#e6e6e6" rx=".6"/><rect x="371.3" y="645.7" width="1.3" height="2" fill="#8a8a8a"/><rect x="373.2" y="645.7" width="1.5" height="2" fill="#9a9a9a"/><rect x="370.4" y="651" width="5.7" height="4.6" fill="#e6e6e6" rx=".6"/><rect x="371.3" y="652.3" width="1.3" height="2" fill="#8a8a8a"/><rect x="373.2" y="652.3" width="1.5" height="2" fill="#9a9a9a"/><rect x="370.4" y="657.6" width="5.7" height="4.6" fill="#e6e6e6" rx=".6"/><rect x="371.3" y="658.9" width="1.3" height="2" fill="#8a8a8a"/><rect x="373.2" y="658.9" width="1.5" height="2" fill="#9a9a9a"/><path d="M376.5 432L376.5 671.2" stroke="#363636" stroke-width="0.8"/><path d="M377.6 439.5V663.7" stroke="#e6e6e6" stroke-width=".8" stroke-dasharray="5.400 1.200"/><rect x="450.1" y="438.2" width="3" height="226.7" fill="#555"/><path d="M451.1 439.5V663.2" stroke="#bdbdbd" stroke-width=".7" stroke-dasharray=".8 1.400"/><rect x="453" y="438.2" width="6.2" height="232.7" fill="url(#grail)"/><path d="M452.8 432L452.8 671.2" stroke="#4a4a4a" stroke-width="0.7"/><rect x="369.8" y="664.7" width="89.4" height="6.5" fill="#8d8d8d"/><rect x="376.8" y="664.9" width="75.9" height="1.4" fill="#bababa"/><rect x="376.8" y="666.3" width="75.9" height="3.8" fill="#999" stroke="#666" stroke-width=".4"/><path d="M369.8 664.7L459.2 664.7" stroke="#4a4a4a" stroke-width="0.6"/><rect x="369" y="671" width="91" height="5" fill="url(#gbase)" rx=".8"/><rect x="369" y="675.4" width="7" height="2" fill="#141414"/><rect x="453" y="675.4" width="7" height="2" fill="#141414"/><rect x="378.6" y="437.8" width="71.8" height="99.4" fill="#838383"/><path d="M377.6 438.5L377.6 537" stroke="#efefef" stroke-width="0.8" stroke-dasharray="11.800 1.400"/><path d="M451.4 438.5L451.4 537" stroke="#e6e6e6" stroke-width="0.7" stroke-dasharray="11.800 1.400"/><rect x="384.2" y="438.2" width="62.2" height="12.2" fill="#606060" stroke="#3a3a3a" stroke-width=".4"/><rect x="385.2" y="439" width="14.3" height="10.6" fill="#222"/><rect x="387.9" y="439.78" width="8.5" height="1.77" fill="#bcbcbc"/><rect x="386" y="440.06" width="1.2" height="1.41" fill="#6a6a6a"/><rect x="397.2" y="440.06" width="1.2" height="1.41" fill="#6a6a6a"/><rect x="387.9" y="443.31" width="8.5" height="1.77" fill="#bcbcbc"/><rect x="386" y="443.59" width="1.2" height="1.41" fill="#6a6a6a"/><rect x="397.2" y="443.59" width="1.2" height="1.41" fill="#6a6a6a"/><rect x="387.9" y="446.84" width="8.5" height="1.77" fill="#bcbcbc"/><rect x="386" y="447.13" width="1.2" height="1.41" fill="#6a6a6a"/><rect x="397.2" y="447.13" width="1.2" height="1.41" fill="#6a6a6a"/><rect x="400.5" y="439" width="14.3" height="10.6" fill="#222"/><rect x="403.2" y="439.78" width="8.5" height="1.77" fill="#bcbcbc"/><rect x="401.3" y="440.06" width="1.2" height="1.41" fill="#6a6a6a"/><rect x="412.5" y="440.06" width="1.2" height="1.41" fill="#6a6a6a"/><rect x="403.2" y="443.31" width="8.5" height="1.77" fill="#bcbcbc"/><rect x="401.3" y="443.59" width="1.2" height="1.41" fill="#6a6a6a"/><rect x="412.5" y="443.59" width="1.2" height="1.41" fill="#6a6a6a"/><rect x="403.2" y="446.84" width="8.5" height="1.77" fill="#bcbcbc"/><rect x="401.3" y="447.13" width="1.2" height="1.41" fill="#6a6a6a"/><rect x="412.5" y="447.13" width="1.2" height="1.41" fill="#6a6a6a"/><rect x="415.8" y="439" width="14.3" height="10.6" fill="#222"/><rect x="418.5" y="439.78" width="8.5" height="1.77" fill="#bcbcbc"/><rect x="416.6" y="440.06" width="1.2" height="1.41" fill="#6a6a6a"/><rect x="427.8" y="440.06" width="1.2" height="1.41" fill="#6a6a6a"/><rect x="418.5" y="443.31" width="8.5" height="1.77" fill="#bcbcbc"/><rect x="416.6" y="443.59" width="1.2" height="1.41" fill="#6a6a6a"/><rect x="427.8" y="443.59" width="1.2" height="1.41" fill="#6a6a6a"/><rect x="418.5" y="446.84" width="8.5" height="1.77" fill="#bcbcbc"/><rect x="416.6" y="447.13" width="1.2" height="1.41" fill="#6a6a6a"/><rect x="427.8" y="447.13" width="1.2" height="1.41" fill="#6a6a6a"/><rect x="431.1" y="439" width="14.3" height="10.6" fill="#222"/><rect x="433.8" y="439.78" width="8.5" height="1.77" fill="#bcbcbc"/><rect x="431.9" y="440.06" width="1.2" height="1.41" fill="#6a6a6a"/><rect x="443.1" y="440.06" width="1.2" height="1.41" fill="#6a6a6a"/><rect x="433.8" y="443.31" width="8.5" height="1.77" fill="#bcbcbc"/><rect x="431.9" y="443.59" width="1.2" height="1.41" fill="#6a6a6a"/><rect x="443.1" y="443.59" width="1.2" height="1.41" fill="#6a6a6a"/><rect x="433.8" y="446.84" width="8.5" height="1.77" fill="#bcbcbc"/><rect x="431.9" y="447.13" width="1.2" height="1.41" fill="#6a6a6a"/><rect x="443.1" y="447.13" width="1.2" height="1.41" fill="#6a6a6a"/><rect x="384.2" y="451.4" width="62.2" height="12.4" fill="#606060" stroke="#3a3a3a" stroke-width=".4"/><rect x="385.2" y="452.2" width="14.3" height="10.8" fill="#222"/><rect x="387.9" y="452.99" width="8.5" height="1.8" fill="#bcbcbc"/><rect x="386" y="453.28" width="1.2" height="1.44" fill="#6a6a6a"/><rect x="397.2" y="453.28" width="1.2" height="1.44" fill="#6a6a6a"/><rect x="387.9" y="456.59" width="8.5" height="1.8" fill="#bcbcbc"/><rect x="386" y="456.88" width="1.2" height="1.44" fill="#6a6a6a"/><rect x="397.2" y="456.88" width="1.2" height="1.44" fill="#6a6a6a"/><rect x="387.9" y="460.19" width="8.5" height="1.8" fill="#bcbcbc"/><rect x="386" y="460.48" width="1.2" height="1.44" fill="#6a6a6a"/><rect x="397.2" y="460.48" width="1.2" height="1.44" fill="#6a6a6a"/><rect x="400.5" y="452.2" width="14.3" height="10.8" fill="#222"/><rect x="403.2" y="452.99" width="8.5" height="1.8" fill="#bcbcbc"/><rect x="401.3" y="453.28" width="1.2" height="1.44" fill="#6a6a6a"/><rect x="412.5" y="453.28" width="1.2" height="1.44" fill="#6a6a6a"/><rect x="403.2" y="456.59" width="8.5" height="1.8" fill="#bcbcbc"/><rect x="401.3" y="456.88" width="1.2" height="1.44" fill="#6a6a6a"/><rect x="412.5" y="456.88" width="1.2" height="1.44" fill="#6a6a6a"/><rect x="403.2" y="460.19" width="8.5" height="1.8" fill="#bcbcbc"/><rect x="401.3" y="460.48" width="1.2" height="1.44" fill="#6a6a6a"/><rect x="412.5" y="460.48" width="1.2" height="1.44" fill="#6a6a6a"/><rect x="415.8" y="452.2" width="14.3" height="10.8" fill="#222"/><rect x="418.5" y="452.99" width="8.5" height="1.8" fill="#bcbcbc"/><rect x="416.6" y="453.28" width="1.2" height="1.44" fill="#6a6a6a"/><rect x="427.8" y="453.28" width="1.2" height="1.44" fill="#6a6a6a"/><rect x="418.5" y="456.59" width="8.5" height="1.8" fill="#bcbcbc"/><rect x="416.6" y="456.88" width="1.2" height="1.44" fill="#6a6a6a"/><rect x="427.8" y="456.88" width="1.2" height="1.44" fill="#6a6a6a"/><rect x="418.5" y="460.19" width="8.5" height="1.8" fill="#bcbcbc"/><rect x="416.6" y="460.48" width="1.2" height="1.44" fill="#6a6a6a"/><rect x="427.8" y="460.48" width="1.2" height="1.44" fill="#6a6a6a"/><rect x="431.1" y="452.2" width="14.3" height="10.8" fill="#222"/><rect x="433.8" y="452.99" width="8.5" height="1.8" fill="#bcbcbc"/><rect x="431.9" y="453.28" width="1.2" height="1.44" fill="#6a6a6a"/><rect x="443.1" y="453.28" width="1.2" height="1.44" fill="#6a6a6a"/><rect x="433.8" y="456.59" width="8.5" height="1.8" fill="#bcbcbc"/><rect x="431.9" y="456.88" width="1.2" height="1.44" fill="#6a6a6a"/><rect x="443.1" y="456.88" width="1.2" height="1.44" fill="#6a6a6a"/><rect x="433.8" y="460.19" width="8.5" height="1.8" fill="#bcbcbc"/><rect x="431.9" y="460.48" width="1.2" height="1.44" fill="#6a6a6a"/><rect x="443.1" y="460.48" width="1.2" height="1.44" fill="#6a6a6a"/><rect x="384.2" y="465" width="62.2" height="12.2" fill="#606060" stroke="#3a3a3a" stroke-width=".4"/><rect x="385.2" y="465.8" width="14.3" height="10.6" fill="#222"/><rect x="387.9" y="466.58" width="8.5" height="1.77" fill="#bcbcbc"/><rect x="386" y="466.86" width="1.2" height="1.41" fill="#6a6a6a"/><rect x="397.2" y="466.86" width="1.2" height="1.41" fill="#6a6a6a"/><rect x="387.9" y="470.11" width="8.5" height="1.77" fill="#bcbcbc"/><rect x="386" y="470.39" width="1.2" height="1.41" fill="#6a6a6a"/><rect x="397.2" y="470.39" width="1.2" height="1.41" fill="#6a6a6a"/><rect x="387.9" y="473.64" width="8.5" height="1.77" fill="#bcbcbc"/><rect x="386" y="473.93" width="1.2" height="1.41" fill="#6a6a6a"/><rect x="397.2" y="473.93" width="1.2" height="1.41" fill="#6a6a6a"/><rect x="400.5" y="465.8" width="14.3" height="10.6" fill="#222"/><rect x="403.2" y="466.58" width="8.5" height="1.77" fill="#bcbcbc"/><rect x="401.3" y="466.86" width="1.2" height="1.41" fill="#6a6a6a"/><rect x="412.5" y="466.86" width="1.2" height="1.41" fill="#6a6a6a"/><rect x="403.2" y="470.11" width="8.5" height="1.77" fill="#bcbcbc"/><rect x="401.3" y="470.39" width="1.2" height="1.41" fill="#6a6a6a"/><rect x="412.5" y="470.39" width="1.2" height="1.41" fill="#6a6a6a"/><rect x="403.2" y="473.64" width="8.5" height="1.77" fill="#bcbcbc"/><rect x="401.3" y="473.93" width="1.2" height="1.41" fill="#6a6a6a"/><rect x="412.5" y="473.93" width="1.2" height="1.41" fill="#6a6a6a"/><rect x="415.8" y="465.8" width="14.3" height="10.6" fill="#222"/><rect x="418.5" y="466.58" width="8.5" height="1.77" fill="#bcbcbc"/><rect x="416.6" y="466.86" width="1.2" height="1.41" fill="#6a6a6a"/><rect x="427.8" y="466.86" width="1.2" height="1.41" fill="#6a6a6a"/><rect x="418.5" y="470.11" width="8.5" height="1.77" fill="#bcbcbc"/><rect x="416.6" y="470.39" width="1.2" height="1.41" fill="#6a6a6a"/><rect x="427.8" y="470.39" width="1.2" height="1.41" fill="#6a6a6a"/><rect x="418.5" y="473.64" width="8.5" height="1.77" fill="#bcbcbc"/><rect x="416.6" y="473.93" width="1.2" height="1.41" fill="#6a6a6a"/><rect x="427.8" y="473.93" width="1.2" height="1.41" fill="#6a6a6a"/><rect x="431.1" y="465.8" width="14.3" height="10.6" fill="#222"/><rect x="433.8" y="466.58" width="8.5" height="1.77" fill="#bcbcbc"/><rect x="431.9" y="466.86" width="1.2" height="1.41" fill="#6a6a6a"/><rect x="443.1" y="466.86" width="1.2" height="1.41" fill="#6a6a6a"/><rect x="433.8" y="470.11" width="8.5" height="1.77" fill="#bcbcbc"/><rect x="431.9" y="470.39" width="1.2" height="1.41" fill="#6a6a6a"/><rect x="443.1" y="470.39" width="1.2" height="1.41" fill="#6a6a6a"/><rect x="433.8" y="473.64" width="8.5" height="1.77" fill="#bcbcbc"/><rect x="431.9" y="473.93" width="1.2" height="1.41" fill="#6a6a6a"/><rect x="443.1" y="473.93" width="1.2" height="1.41" fill="#6a6a6a"/><rect x="384.2" y="478.2" width="62.2" height="12.8" fill="#606060" stroke="#3a3a3a" stroke-width=".4"/><rect x="385.2" y="479" width="14.3" height="11.2" fill="#222"/><rect x="387.9" y="479.82" width="8.5" height="1.87" fill="#bcbcbc"/><rect x="386" y="480.12" width="1.2" height="1.49" fill="#6a6a6a"/><rect x="397.2" y="480.12" width="1.2" height="1.49" fill="#6a6a6a"/><rect x="387.9" y="483.55" width="8.5" height="1.87" fill="#bcbcbc"/><rect x="386" y="483.85" width="1.2" height="1.49" fill="#6a6a6a"/><rect x="397.2" y="483.85" width="1.2" height="1.49" fill="#6a6a6a"/><rect x="387.9" y="487.29" width="8.5" height="1.87" fill="#bcbcbc"/><rect x="386" y="487.59" width="1.2" height="1.49" fill="#6a6a6a"/><rect x="397.2" y="487.59" width="1.2" height="1.49" fill="#6a6a6a"/><rect x="400.5" y="479" width="14.3" height="11.2" fill="#222"/><rect x="403.2" y="479.82" width="8.5" height="1.87" fill="#bcbcbc"/><rect x="401.3" y="480.12" width="1.2" height="1.49" fill="#6a6a6a"/><rect x="412.5" y="480.12" width="1.2" height="1.49" fill="#6a6a6a"/><rect x="403.2" y="483.55" width="8.5" height="1.87" fill="#bcbcbc"/><rect x="401.3" y="483.85" width="1.2" height="1.49" fill="#6a6a6a"/><rect x="412.5" y="483.85" width="1.2" height="1.49" fill="#6a6a6a"/><rect x="403.2" y="487.29" width="8.5" height="1.87" fill="#bcbcbc"/><rect x="401.3" y="487.59" width="1.2" height="1.49" fill="#6a6a6a"/><rect x="412.5" y="487.59" width="1.2" height="1.49" fill="#6a6a6a"/><rect x="415.8" y="479" width="14.3" height="11.2" fill="#222"/><rect x="418.5" y="479.82" width="8.5" height="1.87" fill="#bcbcbc"/><rect x="416.6" y="480.12" width="1.2" height="1.49" fill="#6a6a6a"/><rect x="427.8" y="480.12" width="1.2" height="1.49" fill="#6a6a6a"/><rect x="418.5" y="483.55" width="8.5" height="1.87" fill="#bcbcbc"/><rect x="416.6" y="483.85" width="1.2" height="1.49" fill="#6a6a6a"/><rect x="427.8" y="483.85" width="1.2" height="1.49" fill="#6a6a6a"/><rect x="418.5" y="487.29" width="8.5" height="1.87" fill="#bcbcbc"/><rect x="416.6" y="487.59" width="1.2" height="1.49" fill="#6a6a6a"/><rect x="427.8" y="487.59" width="1.2" height="1.49" fill="#6a6a6a"/><rect x="431.1" y="479" width="14.3" height="11.2" fill="#222"/><rect x="433.8" y="479.82" width="8.5" height="1.87" fill="#bcbcbc"/><rect x="431.9" y="480.12" width="1.2" height="1.49" fill="#6a6a6a"/><rect x="443.1" y="480.12" width="1.2" height="1.49" fill="#6a6a6a"/><rect x="433.8" y="483.55" width="8.5" height="1.87" fill="#bcbcbc"/><rect x="431.9" y="483.85" width="1.2" height="1.49" fill="#6a6a6a"/><rect x="443.1" y="483.85" width="1.2" height="1.49" fill="#6a6a6a"/><rect x="433.8" y="487.29" width="8.5" height="1.87" fill="#bcbcbc"/><rect x="431.9" y="487.59" width="1.2" height="1.49" fill="#6a6a6a"/><rect x="443.1" y="487.59" width="1.2" height="1.49" fill="#6a6a6a"/><rect x="384.2" y="492.4" width="62.2" height="12.2" fill="#6b6b6b" stroke="#3a3a3a" stroke-width=".4"/><rect x="384.6" y="492.8" width="61.4" height="3.4" fill="#767676"/><rect x="385.4" y="493.5" width="1.8" height="1.8" fill="#2e2e2e"/><rect x="391.7" y="493.6" width="18.5" height="1.7" fill="#454545" rx=".85"/><rect x="420.7" y="493.6" width="23.5" height="1.7" fill="#454545" rx=".85"/><rect x="384.4" y="496.5" width="57.7" height="7.4" fill="#2a2a2a"/><rect x="385.3" y="496.85" width="10.82" height="3" fill="#c6c6c6"/><rect x="386.1" y="497.69" width="9.02" height="1.32" fill="#858585"/><rect x="385.3" y="500.55" width="10.82" height="3" fill="#c6c6c6"/><rect x="386.1" y="501.39" width="9.02" height="1.32" fill="#858585"/><rect x="396.52" y="496.9" width="1.1" height="6.6" fill="#5e5e5e"/><rect x="399.72" y="496.85" width="10.82" height="3" fill="#c6c6c6"/><rect x="400.52" y="497.69" width="9.02" height="1.32" fill="#858585"/><rect x="399.72" y="500.55" width="10.82" height="3" fill="#c6c6c6"/><rect x="400.52" y="501.39" width="9.02" height="1.32" fill="#858585"/><rect x="410.95" y="496.9" width="1.1" height="6.6" fill="#5e5e5e"/><rect x="414.15" y="496.85" width="10.82" height="3" fill="#c6c6c6"/><rect x="414.95" y="497.69" width="9.02" height="1.32" fill="#858585"/><rect x="414.15" y="500.55" width="10.82" height="3" fill="#c6c6c6"/><rect x="414.95" y="501.39" width="9.02" height="1.32" fill="#858585"/><rect x="425.38" y="496.9" width="1.1" height="6.6" fill="#5e5e5e"/><rect x="428.57" y="496.85" width="10.82" height="3" fill="#c6c6c6"/><rect x="429.37" y="497.69" width="9.02" height="1.32" fill="#858585"/><rect x="428.57" y="500.55" width="10.82" height="3" fill="#c6c6c6"/><rect x="429.37" y="501.39" width="9.02" height="1.32" fill="#858585"/><rect x="439.8" y="496.9" width="1.1" height="6.6" fill="#5e5e5e"/><rect x="442.4" y="496.5" width="3.5" height="7.4" fill="#7a7a7a"/><rect x="443.2" y="497.1" width="1.4" height="6.2" fill="#4c4c4c"/><rect x="384.2" y="505.6" width="62.2" height="12" fill="#6b6b6b" stroke="#3a3a3a" stroke-width=".4"/><rect x="384.6" y="506" width="61.4" height="3.4" fill="#767676"/><rect x="385.4" y="506.7" width="1.8" height="1.8" fill="#2e2e2e"/><rect x="391.7" y="506.8" width="18.5" height="1.7" fill="#454545" rx=".85"/><rect x="420.7" y="506.8" width="23.5" height="1.7" fill="#454545" rx=".85"/><rect x="384.4" y="509.7" width="57.7" height="7.2" fill="#2a2a2a"/><rect x="385.3" y="510.05" width="10.82" height="2.9" fill="#c6c6c6"/><rect x="386.1" y="510.86" width="9.02" height="1.28" fill="#858585"/><rect x="385.3" y="513.65" width="10.82" height="2.9" fill="#c6c6c6"/><rect x="386.1" y="514.46" width="9.02" height="1.28" fill="#858585"/><rect x="396.52" y="510.1" width="1.1" height="6.4" fill="#5e5e5e"/><rect x="399.72" y="510.05" width="10.82" height="2.9" fill="#c6c6c6"/><rect x="400.52" y="510.86" width="9.02" height="1.28" fill="#858585"/><rect x="399.72" y="513.65" width="10.82" height="2.9" fill="#c6c6c6"/><rect x="400.52" y="514.46" width="9.02" height="1.28" fill="#858585"/><rect x="410.95" y="510.1" width="1.1" height="6.4" fill="#5e5e5e"/><rect x="414.15" y="510.05" width="10.82" height="2.9" fill="#c6c6c6"/><rect x="414.95" y="510.86" width="9.02" height="1.28" fill="#858585"/><rect x="414.15" y="513.65" width="10.82" height="2.9" fill="#c6c6c6"/><rect x="414.95" y="514.46" width="9.02" height="1.28" fill="#858585"/><rect x="425.38" y="510.1" width="1.1" height="6.4" fill="#5e5e5e"/><rect x="428.57" y="510.05" width="10.82" height="2.9" fill="#c6c6c6"/><rect x="429.37" y="510.86" width="9.02" height="1.28" fill="#858585"/><rect x="428.57" y="513.65" width="10.82" height="2.9" fill="#c6c6c6"/><rect x="429.37" y="514.46" width="9.02" height="1.28" fill="#858585"/><rect x="439.8" y="510.1" width="1.1" height="6.4" fill="#5e5e5e"/><rect x="442.4" y="509.7" width="3.5" height="7.2" fill="#7a7a7a"/><rect x="443.2" y="510.3" width="1.4" height="6" fill="#4c4c4c"/><rect x="379.6" y="518.6" width="71" height="6" fill="#6a6a6a" stroke="#3c3c3c" stroke-width=".4"/><path d="M382.6 520.8H447.6" stroke="#dcdcdc" stroke-width="1.600" stroke-dasharray="1.800 1"/><path d="M382.6 522.8H447.6" stroke="#383838" stroke-width="1.800" stroke-dasharray="1.500 1.300"/><rect x="384.2" y="525.2" width="62.2" height="11.2" fill="#606060" stroke="#3a3a3a" stroke-width=".4"/><rect x="385.2" y="526" width="14.3" height="9.6" fill="#222"/><rect x="387.9" y="526.7" width="8.5" height="1.6" fill="#bcbcbc"/><rect x="386" y="526.96" width="1.2" height="1.28" fill="#6a6a6a"/><rect x="397.2" y="526.96" width="1.2" height="1.28" fill="#6a6a6a"/><rect x="387.9" y="529.9" width="8.5" height="1.6" fill="#bcbcbc"/><rect x="386" y="530.16" width="1.2" height="1.28" fill="#6a6a6a"/><rect x="397.2" y="530.16" width="1.2" height="1.28" fill="#6a6a6a"/><rect x="387.9" y="533.1" width="8.5" height="1.6" fill="#bcbcbc"/><rect x="386" y="533.36" width="1.2" height="1.28" fill="#6a6a6a"/><rect x="397.2" y="533.36" width="1.2" height="1.28" fill="#6a6a6a"/><rect x="400.5" y="526" width="14.3" height="9.6" fill="#222"/><rect x="403.2" y="526.7" width="8.5" height="1.6" fill="#bcbcbc"/><rect x="401.3" y="526.96" width="1.2" height="1.28" fill="#6a6a6a"/><rect x="412.5" y="526.96" width="1.2" height="1.28" fill="#6a6a6a"/><rect x="403.2" y="529.9" width="8.5" height="1.6" fill="#bcbcbc"/><rect x="401.3" y="530.16" width="1.2" height="1.28" fill="#6a6a6a"/><rect x="412.5" y="530.16" width="1.2" height="1.28" fill="#6a6a6a"/><rect x="403.2" y="533.1" width="8.5" height="1.6" fill="#bcbcbc"/><rect x="401.3" y="533.36" width="1.2" height="1.28" fill="#6a6a6a"/><rect x="412.5" y="533.36" width="1.2" height="1.28" fill="#6a6a6a"/><rect x="415.8" y="526" width="14.3" height="9.6" fill="#222"/><rect x="418.5" y="526.7" width="8.5" height="1.6" fill="#bcbcbc"/><rect x="416.6" y="526.96" width="1.2" height="1.28" fill="#6a6a6a"/><rect x="427.8" y="526.96" width="1.2" height="1.28" fill="#6a6a6a"/><rect x="418.5" y="529.9" width="8.5" height="1.6" fill="#bcbcbc"/><rect x="416.6" y="530.16" width="1.2" height="1.28" fill="#6a6a6a"/><rect x="427.8" y="530.16" width="1.2" height="1.28" fill="#6a6a6a"/><rect x="418.5" y="533.1" width="8.5" height="1.6" fill="#bcbcbc"/><rect x="416.6" y="533.36" width="1.2" height="1.28" fill="#6a6a6a"/><rect x="427.8" y="533.36" width="1.2" height="1.28" fill="#6a6a6a"/><rect x="431.1" y="526" width="14.3" height="9.6" fill="#222"/><rect x="433.8" y="526.7" width="8.5" height="1.6" fill="#bcbcbc"/><rect x="431.9" y="526.96" width="1.2" height="1.28" fill="#6a6a6a"/><rect x="443.1" y="526.96" width="1.2" height="1.28" fill="#6a6a6a"/><rect x="433.8" y="529.9" width="8.5" height="1.6" fill="#bcbcbc"/><rect x="431.9" y="530.16" width="1.2" height="1.28" fill="#6a6a6a"/><rect x="443.1" y="530.16" width="1.2" height="1.28" fill="#6a6a6a"/><rect x="433.8" y="533.1" width="8.5" height="1.6" fill="#bcbcbc"/><rect x="431.9" y="533.36" width="1.2" height="1.28" fill="#6a6a6a"/><rect x="443.1" y="533.36" width="1.2" height="1.28" fill="#6a6a6a"/><rect x="380.6" y="537.5" width="69" height="19.5" fill="#2d2d2d" stroke="#1d1d1d" stroke-width=".4"/><rect x="382.8" y="538.75" width="15.1" height="3.57" fill="#b6b6b6" rx="1"/><rect x="384.2" y="539.65" width="9" height="1.77" fill="#5a5a5a" rx=".6"/><rect x="394" y="539.15" width="3.5" height="2.77" fill="#2c2c2c"/><rect x="382.8" y="543.23" width="15.1" height="3.57" fill="#b6b6b6" rx="1"/><rect x="384.2" y="544.12" width="9" height="1.77" fill="#5a5a5a" rx=".6"/><rect x="394" y="543.62" width="3.5" height="2.77" fill="#2c2c2c"/><rect x="382.8" y="547.7" width="15.1" height="3.57" fill="#b6b6b6" rx="1"/><rect x="384.2" y="548.6" width="9" height="1.77" fill="#5a5a5a" rx=".6"/><rect x="394" y="548.1" width="3.5" height="2.77" fill="#2c2c2c"/><rect x="382.8" y="552.17" width="15.1" height="3.57" fill="#b6b6b6" rx="1"/><rect x="384.2" y="553.07" width="9" height="1.77" fill="#5a5a5a" rx=".6"/><rect x="394" y="552.57" width="3.5" height="2.77" fill="#2c2c2c"/><rect x="399.3" y="538.75" width="15.1" height="3.57" fill="#b6b6b6" rx="1"/><rect x="400.7" y="539.65" width="9" height="1.77" fill="#5a5a5a" rx=".6"/><rect x="410.5" y="539.15" width="3.5" height="2.77" fill="#2c2c2c"/><rect x="399.3" y="543.23" width="15.1" height="3.57" fill="#b6b6b6" rx="1"/><rect x="400.7" y="544.12" width="9" height="1.77" fill="#5a5a5a" rx=".6"/><rect x="410.5" y="543.62" width="3.5" height="2.77" fill="#2c2c2c"/><rect x="399.3" y="547.7" width="15.1" height="3.57" fill="#b6b6b6" rx="1"/><rect x="400.7" y="548.6" width="9" height="1.77" fill="#5a5a5a" rx=".6"/><rect x="410.5" y="548.1" width="3.5" height="2.77" fill="#2c2c2c"/><rect x="399.3" y="552.17" width="15.1" height="3.57" fill="#b6b6b6" rx="1"/><rect x="400.7" y="553.07" width="9" height="1.77" fill="#5a5a5a" rx=".6"/><rect x="410.5" y="552.57" width="3.5" height="2.77" fill="#2c2c2c"/><rect x="415.8" y="538.75" width="15.1" height="3.57" fill="#b6b6b6" rx="1"/><rect x="417.2" y="539.65" width="9" height="1.77" fill="#5a5a5a" rx=".6"/><rect x="427" y="539.15" width="3.5" height="2.77" fill="#2c2c2c"/><rect x="415.8" y="543.23" width="15.1" height="3.57" fill="#b6b6b6" rx="1"/><rect x="417.2" y="544.12" width="9" height="1.77" fill="#5a5a5a" rx=".6"/><rect x="427" y="543.62" width="3.5" height="2.77" fill="#2c2c2c"/><rect x="415.8" y="547.7" width="15.1" height="3.57" fill="#b6b6b6" rx="1"/><rect x="417.2" y="548.6" width="9" height="1.77" fill="#5a5a5a" rx=".6"/><rect x="427" y="548.1" width="3.5" height="2.77" fill="#2c2c2c"/><rect x="415.8" y="552.17" width="15.1" height="3.57" fill="#b6b6b6" rx="1"/><rect x="417.2" y="553.07" width="9" height="1.77" fill="#5a5a5a" rx=".6"/><rect x="427" y="552.57" width="3.5" height="2.77" fill="#2c2c2c"/><rect x="432.3" y="538.75" width="15.1" height="3.57" fill="#1f1f1f"/><rect x="436.6" y="539.25" width="9.3" height="2.27" fill="#53c3e6"/><rect x="432.3" y="543.23" width="15.1" height="3.57" fill="#b6b6b6" rx="1"/><rect x="433.7" y="544.12" width="9" height="1.77" fill="#5a5a5a" rx=".6"/><rect x="443.5" y="543.62" width="3.5" height="2.77" fill="#2c2c2c"/><rect x="432.3" y="547.7" width="15.1" height="3.57" fill="#b6b6b6" rx="1"/><rect x="433.7" y="548.6" width="9" height="1.77" fill="#5a5a5a" rx=".6"/><rect x="443.5" y="548.1" width="3.5" height="2.77" fill="#2c2c2c"/><rect x="432.3" y="552.17" width="15.1" height="3.57" fill="#b6b6b6" rx="1"/><rect x="433.7" y="553.07" width="9" height="1.77" fill="#5a5a5a" rx=".6"/><rect x="443.5" y="552.57" width="3.5" height="2.77" fill="#2c2c2c"/><rect x="379.6" y="556.6" width="71" height="8" fill="#474747"/><rect x="405.3" y="557.6" width="19.6" height="6.5" fill="#8c8c8c" rx="1" stroke="#5f5f5f" stroke-width=".5"/><rect x="407.5" y="560" width="15.2" height="4.2" fill="#4d4d4d"/><rect x="384.4" y="564.4" width="60.6" height="53.2" fill="#dcdad6" stroke="#6f6f6f" stroke-width=".6"/><rect x="386.7" y="566.6" width="56" height="46.6" fill="url(#gscr)" stroke="#27508f" stroke-width=".5"/><rect x="405.5" y="614" width="19.2" height="2.8" fill="#9b9b9b" stroke="#666" stroke-width=".4"/><path d="M407.1 615.4H423.1" stroke="#444" stroke-width="1" stroke-dasharray="1.500 .7"/><rect x="381.1" y="618.2" width="68" height="5.8" fill="#6a6a6a" stroke="#3a3a3a" stroke-width=".4"/><rect x="383.1" y="619" width="64" height="2.4" fill="#858585"/><rect x="379.6" y="624.6" width="71" height="18.6" fill="#141414"/><rect x="378.6" y="644.2" width="71" height="19.6" fill="#e8e8e8" stroke="#6a6a6a" stroke-width=".5"/><rect x="379.9" y="645.4" width="33.5" height="17.2" fill="url(#gups)" stroke="#8a8a8a" stroke-width=".4"/><rect x="414.8" y="645.4" width="33.5" height="17.2" fill="url(#gups)" stroke="#8a8a8a" stroke-width=".4"/></g><g id="l1"><text x="410" y="111.2" font-size="5.8" font-weight="bold" fill="#000" textLength="56" lengthAdjust="spacingAndGlyphs">2U Ethernet Switch/Hub</text><text x="410" y="121.2" font-size="5.8" font-weight="bold" fill="#000" textLength="31.5" lengthAdjust="spacingAndGlyphs">C2960 Switch</text><text x="410" y="128.1" font-size="5.8" font-weight="bold" fill="#000" textLength="31.5" lengthAdjust="spacingAndGlyphs">C2960 Switch</text><text x="410" y="135.1" font-size="5.8" font-weight="bold" fill="#000" textLength="31.5" lengthAdjust="spacingAndGlyphs">C2960 Switch</text><text x="410" y="205.3" font-size="5.8" font-weight="bold" fill="#000" textLength="44.5" lengthAdjust="spacingAndGlyphs">1U 19 LCD Monitor</text><text x="410" y="211.7" font-size="5.8" font-weight="bold" fill="#000" textLength="33.5" lengthAdjust="spacingAndGlyphs">Keyboard/KVM</text><text x="410" y="220.9" font-size="5.8" font-weight="bold" fill="#000" textLength="17.5" lengthAdjust="spacingAndGlyphs">1U Tray</text><text x="410" y="228.1" font-size="5.8" font-weight="bold" fill="#000" textLength="23.5" lengthAdjust="spacingAndGlyphs">1U Spacer</text><text x="410" y="237.6" font-size="5.8" font-weight="bold" fill="#000" textLength="33.6" lengthAdjust="spacingAndGlyphs">2U RAID Array</text><text x="410" y="254.4" font-size="5.8" font-weight="bold" fill="#000" textLength="22.7" lengthAdjust="spacingAndGlyphs">3U Server</text><text x="410" y="274.3" font-size="5.8" font-weight="bold" fill="#000" textLength="22.7" lengthAdjust="spacingAndGlyphs">3U Server</text><text x="410" y="291" font-size="5.8" font-weight="bold" fill="#000" textLength="22.7" lengthAdjust="spacingAndGlyphs">2U Server</text><text x="410" y="304.2" font-size="5.8" font-weight="bold" fill="#000" textLength="33.6" lengthAdjust="spacingAndGlyphs">2U RAID Array</text><text x="410" y="320.6" font-size="5.8" font-weight="bold" fill="#000" textLength="22.7" lengthAdjust="spacingAndGlyphs">3U Server</text><text x="410" y="337.6" font-size="5.8" font-weight="bold" fill="#000" textLength="22.7" lengthAdjust="spacingAndGlyphs">2U Server</text><text x="410" y="354" font-size="5.8" font-weight="bold" fill="#000" textLength="22.7" lengthAdjust="spacingAndGlyphs">3U Server</text><text x="410" y="374.4" font-size="5.8" font-weight="bold" fill="#000" textLength="8.6" lengthAdjust="spacingAndGlyphs">UPS</text><text x="572.5" y="107.8" font-size="5.8" font-weight="bold" fill="#000" textLength="56" lengthAdjust="spacingAndGlyphs">1U Ethernet Switch/Hub</text><text x="572.5" y="114.6" font-size="5.8" font-weight="bold" fill="#000" textLength="34" lengthAdjust="spacingAndGlyphs">1U KVM Switch</text><text x="572.5" y="121.2" font-size="5.8" font-weight="bold" fill="#000" textLength="31.5" lengthAdjust="spacingAndGlyphs">C3560 Switch</text><text x="572.5" y="151.6" font-size="5.8" font-weight="bold" fill="#000" textLength="22.7" lengthAdjust="spacingAndGlyphs">2U Server</text><text x="572.5" y="164.7" font-size="5.8" font-weight="bold" fill="#000" textLength="22.7" lengthAdjust="spacingAndGlyphs">2U Server</text><text x="572.5" y="181.6" font-size="5.8" font-weight="bold" fill="#000" textLength="35" lengthAdjust="spacingAndGlyphs">1U Power Strip</text><text x="572.5" y="234.1" font-size="5.8" font-weight="bold" fill="#000" textLength="22.7" lengthAdjust="spacingAndGlyphs">3U Server</text><text x="572.5" y="254" font-size="5.8" font-weight="bold" fill="#000" textLength="22.7" lengthAdjust="spacingAndGlyphs">3U Server</text><text x="572.5" y="281.5" font-size="5.8" font-weight="bold" fill="#000" textLength="35" lengthAdjust="spacingAndGlyphs">1U Patch Panel</text><text x="572.5" y="294.6" font-size="5.8" font-weight="bold" fill="#000" textLength="35" lengthAdjust="spacingAndGlyphs">1U Patch Panel</text><text x="572.5" y="311.1" font-size="5.8" font-weight="bold" fill="#000" textLength="33.6" lengthAdjust="spacingAndGlyphs">2U RAID Array</text><text x="572.5" y="334" font-size="5.8" font-weight="bold" fill="#000" textLength="22.7" lengthAdjust="spacingAndGlyphs">3U Server</text><text x="572.5" y="374.5" font-size="5.8" font-weight="bold" fill="#000" textLength="8.6" lengthAdjust="spacingAndGlyphs">UPS</text></g><g id="l3"><text x="463" y="446.2" font-size="4.9" font-weight="bold" fill="#000" textLength="34.5" lengthAdjust="spacingAndGlyphs">File/Print Server</text><text x="463" y="460.4" font-size="4.9" font-weight="bold" fill="#000" textLength="34.5" lengthAdjust="spacingAndGlyphs">File/Print Server</text><text x="463" y="473.7" font-size="4.9" font-weight="bold" fill="#000" textLength="34.5" lengthAdjust="spacingAndGlyphs">File/Print Server</text><text x="463" y="486.7" font-size="4.9" font-weight="bold" fill="#000" textLength="39" lengthAdjust="spacingAndGlyphs">Domain Controller</text><text x="463" y="499.7" font-size="4.9" font-weight="bold" fill="#000" textLength="37" lengthAdjust="spacingAndGlyphs">Messaging Server</text><text x="463" y="512.7" font-size="4.9" font-weight="bold" fill="#000" textLength="32" lengthAdjust="spacingAndGlyphs">Storage Server</text><text x="463" y="532.7" font-size="4.9" font-weight="bold" fill="#000" textLength="43.5" lengthAdjust="spacingAndGlyphs">Firewall/VPN/Cache</text><text x="463" y="549.7" font-size="4.9" font-weight="bold" fill="#000" textLength="8.5" lengthAdjust="spacingAndGlyphs">UPS</text><text x="463" y="623.2" font-size="4.9" font-weight="bold" fill="#000" textLength="46" lengthAdjust="spacingAndGlyphs">Keyboard and Display</text><text x="463" y="655.7" font-size="4.9" font-weight="bold" fill="#000" textLength="8.5" lengthAdjust="spacingAndGlyphs">UPS</text><text x="462" y="524" font-size="6.9" font-weight="normal" fill="#1a1a1a" textLength="57.5" lengthAdjust="spacingAndGlyphs">Cisco UCS 6 C240 M3</text></g></svg></div><div id="vsb" class="abs"><div class="abs" style="left:3px;top:2px;width:7px;height:273px;border-radius:3.500px;background:#c1c1c1"></div></div><div id="rgut" class="abs"><svg class="abs" style="left:1.600px;top:296.800px" width="5.600" height="8.800" viewBox="0 0 6 10"><path d="M5.800 0v10L.2 5z" fill="#444"/></svg></div><div class="abs" style="left:0;top:658px;width:700px;height:2px;background:#fff"></div></div></body></html>
